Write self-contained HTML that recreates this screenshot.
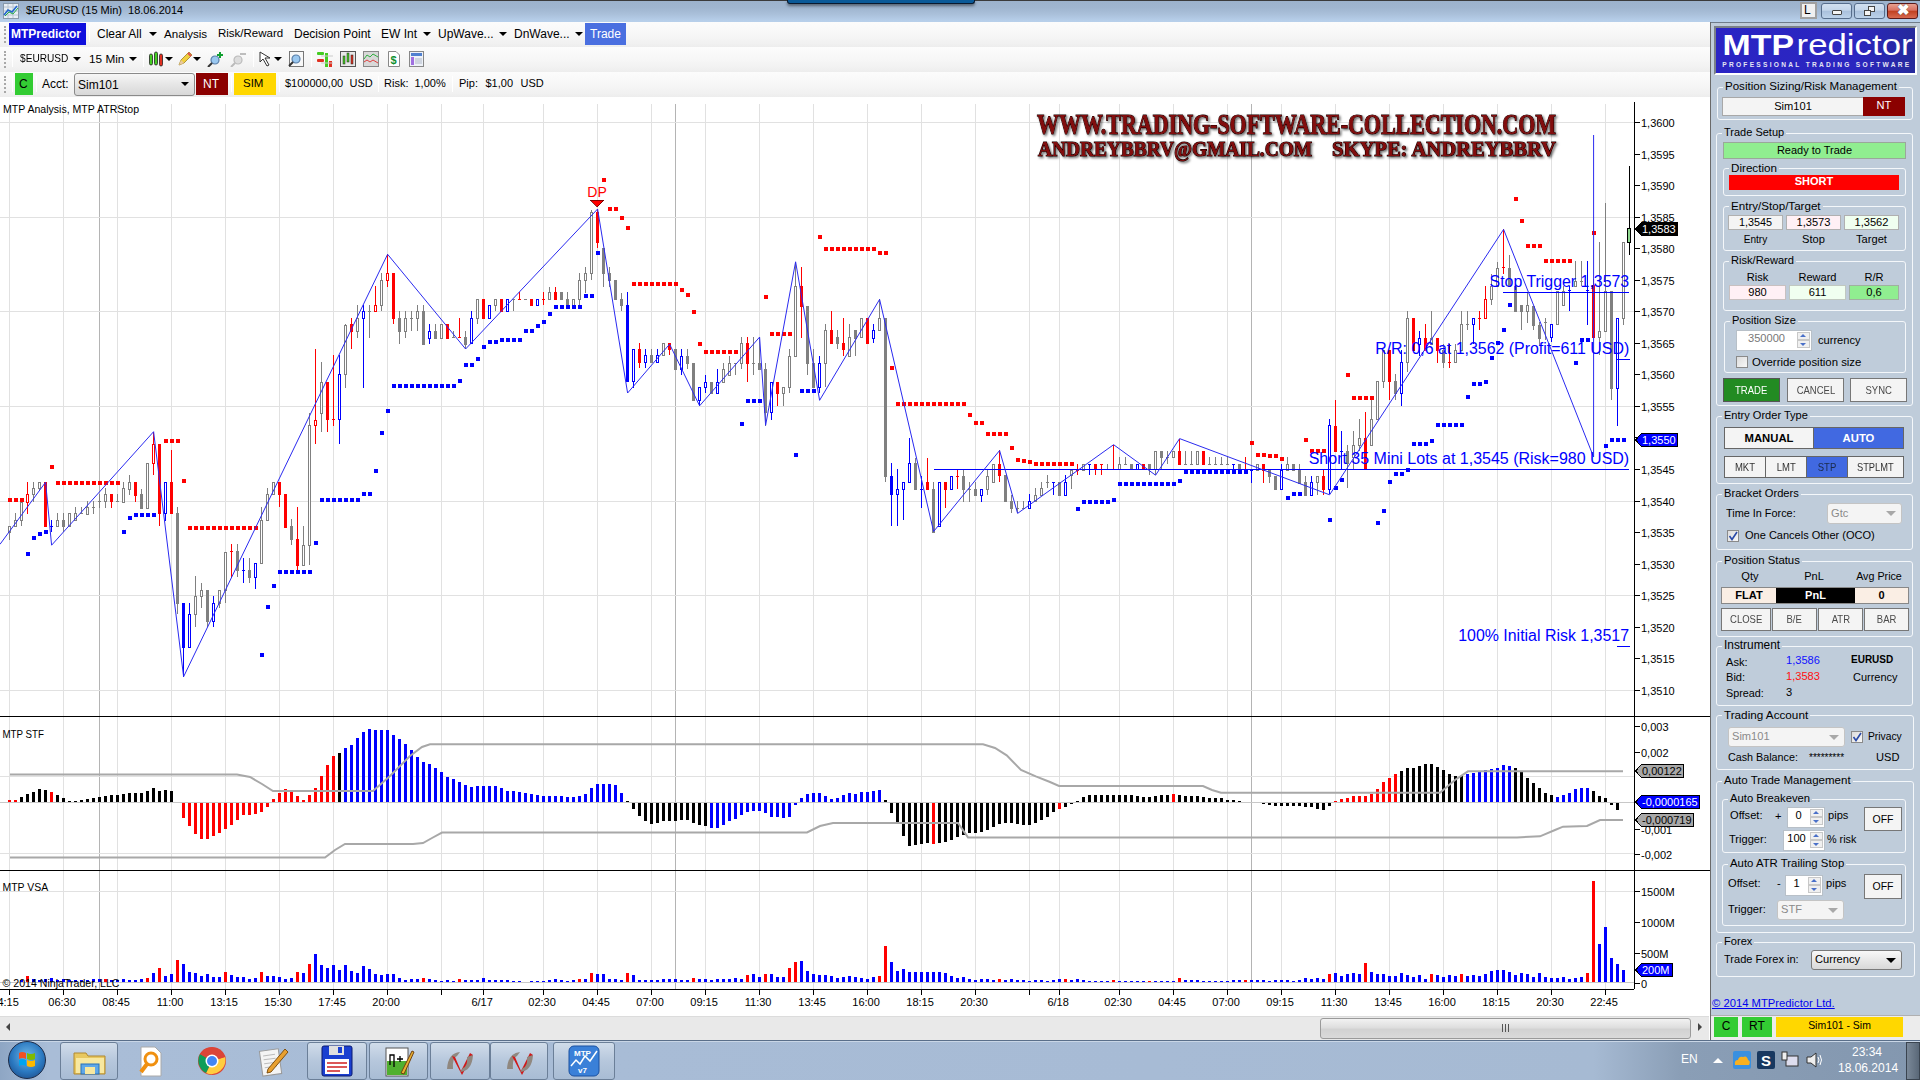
<!DOCTYPE html><html><head><meta charset="utf-8"><style>
*{margin:0;padding:0;box-sizing:border-box}
html,body{width:1920px;height:1080px;overflow:hidden;background:#fff;font-family:"Liberation Sans",sans-serif;font-size:11px;color:#000}
.a{position:absolute}
.tb{position:absolute;left:0;width:1710px;background:linear-gradient(#fcfcfc,#f6f6f6 55%,#f1f1f1 85%,#ededed)}
.grip{position:absolute;left:4px;width:3px;border-left:2px dotted #a8a8a8}
.sep{position:absolute;width:1px;background:#c8c8c8;border-right:1px solid #fff}
.t12{font-size:12px}
</style></head><body>
<div class="a" style="left:0;top:0;width:1920px;height:22px;background:linear-gradient(#9cb2cc 5%,#9fb5cf 35%,#aac0da 65%,#b7cfea 95%)"></div>
<div class="a" style="left:0;top:0;width:1920px;height:1px;background:#3a3a3a"></div>
<div class="a" style="left:787px;top:0;width:188px;height:4px;background:#0b5a98;border:1px solid #0a1a30;border-top:none;border-radius:0 0 3px 3px;box-shadow:0 2px 3px rgba(0,0,0,0.45)"></div>
<svg class="a" style="left:3px;top:3px" width="16" height="16"><rect x="0.5" y="0.5" width="15" height="15" fill="#e8eef5" stroke="#8899aa"/><path d="M1 4H15M1 8H15M1 12H15M5 1V15M10 1V15" stroke="#b8c4d0" stroke-width="1"/><path d="M1 12L5 7L9 9L14 3" stroke="#2266cc" stroke-width="1.6" fill="none"/><path d="M2 13L6 9L10 11L15 5" stroke="#22aa44" stroke-width="1" fill="none"/></svg>
<div class="a" style="left:26px;top:4px;font-size:11px;color:#000">$EURUSD (15 Min)&nbsp; 18.06.2014</div>
<div class="a" style="left:1800px;top:2px;width:17px;height:17px;background:#f0f0f0;border:2px solid #a0a0a0"></div>
<div class="a" style="left:1804px;top:4px;font-size:12px;line-height:13px">L</div>
<div class="a" style="left:1821px;top:3px;width:31px;height:16px;border:1px solid #566d8c;border-radius:3px;background:linear-gradient(#d2e0f0,#c3d5ea 45%,#a9c0dc 50%,#bcd2ea)"></div>
<div class="a" style="left:1854px;top:3px;width:31px;height:16px;border:1px solid #566d8c;border-radius:3px;background:linear-gradient(#d2e0f0,#c3d5ea 45%,#a9c0dc 50%,#bcd2ea)"></div>
<div class="a" style="left:1832px;top:10px;width:10px;height:5px;background:#f4f4f4;border:1px solid #444;border-radius:1px"></div>
<div class="a" style="left:1868px;top:6px;width:7px;height:6px;background:#f4f4f4;border:1px solid #444"></div>
<div class="a" style="left:1864px;top:10px;width:7px;height:6px;background:#f4f4f4;border:1px solid #444"></div>
<div class="a" style="left:1887px;top:3px;width:31px;height:16px;border:1px solid #5a1a1a;border-radius:3px;background:linear-gradient(#e8a090,#d87060 45%,#c04020 50%,#d86a50)"></div>
<div class="a" style="left:1897px;top:1px;font-size:15px;font-weight:bold;color:#fff;text-shadow:0 0 1px #333">&#x2716;</div>
<div class="tb" style="top:22px;height:25px"></div>
<div class="grip" style="top:26px;height:17px"></div>
<div class="tb" style="top:47px;height:25px"></div>
<div class="grip" style="top:51px;height:17px"></div>
<div class="tb" style="top:72px;height:25px"></div>
<div class="grip" style="top:76px;height:17px"></div>
<div class="a" style="left:9px;top:23px;width:77px;height:22px;background:#1010dd"></div>
<div class="a" style="left:11px;top:27px;font-size:12px;font-weight:bold;color:#fff">MTPredictor</div>
<div class="sep" style="left:89px;top:26px;height:16px"></div>
<div class="a" style="left:97px;top:27px;font-size:12px;color:#000;white-space:pre;">Clear All</div>
<div class="a" style="left:149px;top:32px;width:0;height:0;border-left:4px solid transparent;border-right:4px solid transparent;border-top:4px solid #000"></div>
<div class="a" style="left:164px;top:27px;font-size:11.6px;color:#000;white-space:pre;">Analysis</div>
<div class="a" style="left:218px;top:27px;font-size:11.5px;color:#000;white-space:pre;">Risk/Reward</div>
<div class="a" style="left:294px;top:27px;font-size:12px;color:#000;white-space:pre;">Decision Point</div>
<div class="a" style="left:381px;top:27px;font-size:12px;color:#000;white-space:pre;">EW Int</div>
<div class="a" style="left:423px;top:32px;width:0;height:0;border-left:4px solid transparent;border-right:4px solid transparent;border-top:4px solid #000"></div>
<div class="a" style="left:438px;top:27px;font-size:12px;color:#000;white-space:pre;">UpWave...</div>
<div class="a" style="left:499px;top:32px;width:0;height:0;border-left:4px solid transparent;border-right:4px solid transparent;border-top:4px solid #000"></div>
<div class="a" style="left:514px;top:27px;font-size:12px;color:#000;white-space:pre;">DnWave...</div>
<div class="a" style="left:575px;top:32px;width:0;height:0;border-left:4px solid transparent;border-right:4px solid transparent;border-top:4px solid #000"></div>
<div class="a" style="left:585px;top:23px;width:41px;height:22px;background:#4a6fe0"></div>
<div class="a" style="left:590px;top:27px;font-size:12px;color:#fff;white-space:pre;">Trade</div>
<div class="sep" style="left:12px;top:51px;height:16px"></div>
<div class="a" style="left:20px;top:52px;font-size:11px;color:#000;white-space:pre;transform:scaleX(0.92);transform-origin:0 0">$EURUSD</div>
<div class="a" style="left:73px;top:57px;width:0;height:0;border-left:4px solid transparent;border-right:4px solid transparent;border-top:4px solid #000"></div>
<div class="a" style="left:89px;top:52px;font-size:11.8px;color:#000;white-space:pre;">15 Min</div>
<div class="a" style="left:129px;top:57px;width:0;height:0;border-left:4px solid transparent;border-right:4px solid transparent;border-top:4px solid #000"></div>
<div class="sep" style="left:143px;top:51px;height:16px"></div>
<svg class="a" style="left:148px;top:51px" width="16" height="16"><g stroke="#222" stroke-width="0.8"><rect x="1.5" y="3" width="3" height="11" rx="1.5" fill="#44cc22"/><rect x="6.5" y="1" width="3" height="13" rx="1.5" fill="#44cc22"/><rect x="11.5" y="3" width="3" height="12" rx="1.5" fill="#e03020"/></g></svg>
<div class="a" style="left:165px;top:57px;width:0;height:0;border-left:4px solid transparent;border-right:4px solid transparent;border-top:4px solid #000"></div>
<svg class="a" style="left:177px;top:51px" width="16" height="16"><path d="M2 14L4 9L12 1L15 4L7 12Z" fill="#f0d040" stroke="#a08020" stroke-width="0.8"/><path d="M11 2L14 5" stroke="#e05050" stroke-width="2"/><path d="M2 14L4 9L7 12Z" fill="#e8c8a0"/></svg>
<div class="a" style="left:193px;top:57px;width:0;height:0;border-left:4px solid transparent;border-right:4px solid transparent;border-top:4px solid #000"></div>
<svg class="a" style="left:207px;top:51px" width="17" height="16"><circle cx="8" cy="9" r="4" fill="#9ac8f0" stroke="#5a7fa8" stroke-width="1.2"/><path d="M5 12L1 16" stroke="#333" stroke-width="2"/><path d="M13 1V7M10 4H16" stroke="#10a030" stroke-width="2"/></svg>
<svg class="a" style="left:230px;top:51px" width="17" height="16"><circle cx="8" cy="9" r="4" fill="#ddd" stroke="#bbb" stroke-width="1.2"/><path d="M5 12L1 16" stroke="#bbb" stroke-width="2"/><path d="M10 3H16" stroke="#aaa" stroke-width="1.5"/></svg>
<div class="sep" style="left:253px;top:51px;height:16px"></div>
<svg class="a" style="left:259px;top:51px" width="14" height="16"><path d="M1 1L1 11L4 8L8 15L10 14L6 7L11 7Z" fill="#fff" stroke="#333" stroke-width="1"/></svg>
<div class="a" style="left:274px;top:57px;width:0;height:0;border-left:4px solid transparent;border-right:4px solid transparent;border-top:4px solid #000"></div>
<svg class="a" style="left:288px;top:51px" width="16" height="16"><rect x="1.5" y="0.5" width="14" height="15" fill="#f8f8f8" stroke="#777"/><circle cx="8" cy="8" r="4" fill="#9ac8f0" stroke="#5a7fa8" stroke-width="1.2"/><path d="M5 11L1 15" stroke="#333" stroke-width="2"/></svg>
<div class="sep" style="left:311px;top:51px;height:16px"></div>
<svg class="a" style="left:317px;top:51px" width="16" height="16"><rect x="0" y="1" width="7" height="3" rx="1" fill="#44cc22"/><rect x="0" y="8" width="7" height="3" rx="1" fill="#e03020"/><rect x="8" y="2" width="3" height="14" fill="#44cc22"/><rect x="12" y="10" width="3" height="6" fill="#e03020"/><path d="M4 5H16M4 12H16" stroke="#ccc"/></svg>
<svg class="a" style="left:340px;top:51px" width="16" height="16"><rect x="0.5" y="0.5" width="15" height="15" fill="#e8e8e8" stroke="#555"/><rect x="3" y="5" width="2" height="8" fill="#44cc22" stroke="#222" stroke-width="0.5"/><rect x="7" y="2" width="2" height="9" fill="#44cc22" stroke="#222" stroke-width="0.5"/><rect x="11" y="4" width="2" height="9" fill="#e03020" stroke="#222" stroke-width="0.5"/></svg>
<svg class="a" style="left:363px;top:51px" width="16" height="16"><rect x="0.5" y="0.5" width="15" height="15" fill="#d8d8d8" stroke="#888"/><path d="M1 8L4 4L7 6L10 3L15 6" stroke="#30b040" fill="none"/><path d="M1 11L4 9L7 11L10 9L15 12" stroke="#e04040" fill="none"/></svg>
<svg class="a" style="left:388px;top:51px" width="12" height="16"><path d="M0.5 0.5H8L11.5 4V15.5H0.5Z" fill="#fff" stroke="#888"/><text x="2.5" y="13" font-size="11" font-weight="bold" fill="#109030" font-family="Liberation Sans">$</text></svg>
<svg class="a" style="left:409px;top:51px" width="15" height="16"><rect x="0.5" y="0.5" width="14" height="15" fill="#eef2f8" stroke="#888"/><rect x="2" y="2" width="11" height="3" fill="#5080d0"/><rect x="2" y="6" width="3" height="8" fill="#a070e0"/><path d="M6 8H13M6 10H13M6 12H13" stroke="#b0b8c8"/></svg>
<div class="sep" style="left:12px;top:76px;height:16px"></div>
<div class="a" style="left:15px;top:73px;width:18px;height:22px;background:#33cc33"></div>
<div class="a" style="left:19px;top:77px;font-size:12px;color:#000;white-space:pre;">C</div>
<div class="sep" style="left:36px;top:76px;height:16px"></div>
<div class="a" style="left:42px;top:77px;font-size:12px;color:#000;white-space:pre;">Acct:</div>
<div class="a" style="left:74px;top:73px;width:121px;height:23px;border:1px solid #8a8a8a;border-radius:3px;background:linear-gradient(#f6f6f6,#e6e6e6 50%,#d8d8d8)"></div>
<div class="a" style="left:78px;top:78px;font-size:12px;color:#000;white-space:pre;">Sim101</div>
<div class="a" style="left:181px;top:82px;width:0;height:0;border-left:4px solid transparent;border-right:4px solid transparent;border-top:4px solid #000"></div>
<div class="a" style="left:196px;top:73px;width:32px;height:22px;background:#8b0000"></div>
<div class="a" style="left:203px;top:77px;font-size:12px;color:#fff;white-space:pre;">NT</div>
<div class="sep" style="left:231px;top:76px;height:16px"></div>
<div class="a" style="left:234px;top:73px;width:42px;height:22px;background:#ffd700"></div>
<div class="a" style="left:243px;top:77px;font-size:11.5px;color:#000;white-space:pre;">SIM</div>
<div class="sep" style="left:279px;top:76px;height:16px"></div>
<div class="a" style="left:285px;top:77px;font-size:11px;color:#000;white-space:pre;">$100000,00</div>
<div class="a" style="left:349.5px;top:77px;font-size:11px;color:#000;white-space:pre;">USD</div>
<div class="sep" style="left:378px;top:76px;height:16px"></div>
<div class="a" style="left:384px;top:77px;font-size:11px;color:#000;white-space:pre;">Risk:</div>
<div class="a" style="left:414.5px;top:77px;font-size:11px;color:#000;white-space:pre;">1,00%</div>
<div class="sep" style="left:452px;top:76px;height:16px"></div>
<div class="a" style="left:459px;top:77px;font-size:11px;color:#000;white-space:pre;">Pip:</div>
<div class="a" style="left:485.5px;top:77px;font-size:11px;color:#000;white-space:pre;">$1,00</div>
<div class="a" style="left:520.5px;top:77px;font-size:11px;color:#000;white-space:pre;">USD</div>
<svg class="a" style="left:0;top:97px" width="1710" height="919" viewBox="0 97 1710 919" shape-rendering="crispEdges"><rect x="0" y="97" width="1710" height="919" fill="#fff"/><path d="M9.5 104V716M9.5 717V870M9.5 871V989M63.5 104V716M63.5 717V870M63.5 871V989M117.5 104V716M117.5 717V870M117.5 871V989M171.5 104V716M171.5 717V870M171.5 871V989M225.5 104V716M225.5 717V870M225.5 871V989M279.5 104V716M279.5 717V870M279.5 871V989M333.5 104V716M333.5 717V870M333.5 871V989M387.5 104V716M387.5 717V870M387.5 871V989M441.5 104V716M441.5 717V870M441.5 871V989M483.5 104V716M483.5 717V870M483.5 871V989M543.5 104V716M543.5 717V870M543.5 871V989M597.5 104V716M597.5 717V870M597.5 871V989M651.5 104V716M651.5 717V870M651.5 871V989M705.5 104V716M705.5 717V870M705.5 871V989M759.5 104V716M759.5 717V870M759.5 871V989M813.5 104V716M813.5 717V870M813.5 871V989M867.5 104V716M867.5 717V870M867.5 871V989M921.5 104V716M921.5 717V870M921.5 871V989M975.5 104V716M975.5 717V870M975.5 871V989M1029.5 104V716M1029.5 717V870M1029.5 871V989M1059.5 104V716M1059.5 717V870M1059.5 871V989M1119.5 104V716M1119.5 717V870M1119.5 871V989M1173.5 104V716M1173.5 717V870M1173.5 871V989M1227.5 104V716M1227.5 717V870M1227.5 871V989M1281.5 104V716M1281.5 717V870M1281.5 871V989M1335.5 104V716M1335.5 717V870M1335.5 871V989M1389.5 104V716M1389.5 717V870M1389.5 871V989M1443.5 104V716M1443.5 717V870M1443.5 871V989M1497.5 104V716M1497.5 717V870M1497.5 871V989M1551.5 104V716M1551.5 717V870M1551.5 871V989M1605.5 104V716M1605.5 717V870M1605.5 871V989" stroke="#e1e1e1" stroke-width="1" fill="none"/><path d="M99.5 104V989M675.5 104V989M1251.5 104V989" stroke="#b4b4b4" stroke-width="1" fill="none"/><path d="M0 122.5H1634M0 217.5H1634M0 311.5H1634M0 406.5H1634M0 501.5H1634M0 595.5H1634M0 690.5H1634M0 776.5H1634M0 853.5H1634M0 891.5H1634" stroke="#e1e1e1" stroke-width="1" fill="none"/><path d="M0 802.5H1634M0 982.5H1634" stroke="#c8c8c8" stroke-width="1" fill="none"/><path d="M0 716.5H1710M0 870.5H1710M0 989.5H1634M1634.5 102V989" stroke="#000" stroke-width="1" fill="none"/><path d="M1635 122.5H1640M1635 154.5H1640M1635 185.5H1640M1635 217.5H1640M1635 248.5H1640M1635 280.5H1640M1635 311.5H1640M1635 343.5H1640M1635 374.5H1640M1635 406.5H1640M1635 437.5H1640M1635 469.5H1640M1635 501.5H1640M1635 532.5H1640M1635 564.5H1640M1635 595.5H1640M1635 627.5H1640M1635 658.5H1640M1635 690.5H1640M1635 726.5H1640M1635 752.5H1640M1635 829.5H1640M1635 854.5H1640M1635 891.5H1640M1635 922.5H1640M1635 953.5H1640M1635 983.5H1640M9.5 990V995M63.5 990V995M117.5 990V995M171.5 990V995M225.5 990V995M279.5 990V995M333.5 990V995M387.5 990V995M441.5 990V995M483.5 990V995M543.5 990V995M597.5 990V995M651.5 990V995M705.5 990V995M759.5 990V995M813.5 990V995M867.5 990V995M921.5 990V995M975.5 990V995M1029.5 990V995M1059.5 990V995M1119.5 990V995M1173.5 990V995M1227.5 990V995M1281.5 990V995M1335.5 990V995M1389.5 990V995M1443.5 990V995M1497.5 990V995M1551.5 990V995M1605.5 990V995" stroke="#000" stroke-width="1" fill="none"/><g font-family="Liberation Sans" font-size="11" fill="#000" shape-rendering="auto"><text x="1641" y="126.5">1,3600</text><text x="1641" y="158.5">1,3595</text><text x="1641" y="189.5">1,3590</text><text x="1641" y="221.5">1,3585</text><text x="1641" y="252.5">1,3580</text><text x="1641" y="284.5">1,3575</text><text x="1641" y="315.5">1,3570</text><text x="1641" y="347.5">1,3565</text><text x="1641" y="378.5">1,3560</text><text x="1641" y="410.5">1,3555</text><text x="1641" y="441.5">1,3550</text><text x="1641" y="473.5">1,3545</text><text x="1641" y="505.5">1,3540</text><text x="1641" y="536.5">1,3535</text><text x="1641" y="568.5">1,3530</text><text x="1641" y="599.5">1,3525</text><text x="1641" y="631.5">1,3520</text><text x="1641" y="662.5">1,3515</text><text x="1641" y="694.5">1,3510</text><text x="1641" y="730.5">0,003</text><text x="1641" y="756.5">0,002</text><text x="1641" y="833.5">-0,001</text><text x="1641" y="858.5">-0,002</text><text x="1641" y="895.5">1500M</text><text x="1641" y="926.5">1000M</text><text x="1641" y="957.5">500M</text><text x="1641" y="987.5">0</text><text x="8.1" y="1006" text-anchor="middle">4:15</text><text x="62.1" y="1006" text-anchor="middle">06:30</text><text x="116.1" y="1006" text-anchor="middle">08:45</text><text x="170.1" y="1006" text-anchor="middle">11:00</text><text x="224.1" y="1006" text-anchor="middle">13:15</text><text x="278.1" y="1006" text-anchor="middle">15:30</text><text x="332.1" y="1006" text-anchor="middle">17:45</text><text x="386.1" y="1006" text-anchor="middle">20:00</text><text x="482.1" y="1006" text-anchor="middle">6/17</text><text x="542.1" y="1006" text-anchor="middle">02:30</text><text x="596.1" y="1006" text-anchor="middle">04:45</text><text x="650.1" y="1006" text-anchor="middle">07:00</text><text x="704.1" y="1006" text-anchor="middle">09:15</text><text x="758.1" y="1006" text-anchor="middle">11:30</text><text x="812.1" y="1006" text-anchor="middle">13:45</text><text x="866.1" y="1006" text-anchor="middle">16:00</text><text x="920.1" y="1006" text-anchor="middle">18:15</text><text x="974.1" y="1006" text-anchor="middle">20:30</text><text x="1058.1" y="1006" text-anchor="middle">6/18</text><text x="1118.1" y="1006" text-anchor="middle">02:30</text><text x="1172.1" y="1006" text-anchor="middle">04:45</text><text x="1226.1" y="1006" text-anchor="middle">07:00</text><text x="1280.1" y="1006" text-anchor="middle">09:15</text><text x="1334.1" y="1006" text-anchor="middle">11:30</text><text x="1388.1" y="1006" text-anchor="middle">13:45</text><text x="1442.1" y="1006" text-anchor="middle">16:00</text><text x="1496.1" y="1006" text-anchor="middle">18:15</text><text x="1550.1" y="1006" text-anchor="middle">20:30</text><text x="1604.1" y="1006" text-anchor="middle">22:45</text></g><g shape-rendering="crispEdges"><path fill="#808080" d="M9 526h1v14h-1zM8 526h3v7h-3zM15 513h1v13h-1zM14 520h3v7h-3zM21 502h1v24h-1zM20 502h3v19h-3zM33 482h1v20h-1zM32 488h3v7h-3zM39 482h1v8h-1zM38 482h3v7h-3zM57 513h1v13h-1zM56 520h3v7h-3zM63 513h1v19h-1zM62 520h3v7h-3zM69 513h1v13h-1zM68 513h3v14h-3zM75 507h1v13h-1zM74 513h3v8h-3zM81 507h1v7h-1zM80 513h3v1h-3zM87 501h1v13h-1zM86 507h3v8h-3zM93 501h1v13h-1zM92 507h3v1h-3zM99 494h1v14h-1zM98 501h3v1h-3zM105 488h1v20h-1zM104 494h3v8h-3zM117 494h1v7h-1zM116 501h3v1h-3zM123 482h1v20h-1zM122 488h3v15h-3zM129 475h1v20h-1zM128 482h3v8h-3zM141 489h1v19h-1zM140 494h3v15h-3zM147 463h1v45h-1zM146 463h3v46h-3zM177 507h1v107h-1zM176 513h3v91h-3zM195 576h1v51h-1zM194 596h3v19h-3zM201 583h1v25h-1zM200 590h3v7h-3zM207 590h1v37h-1zM206 590h3v32h-3zM219 590h1v18h-1zM218 590h3v14h-3zM225 552h1v51h-1zM224 552h3v39h-3zM237 544h1v33h-1zM236 551h3v20h-3zM249 558h1v25h-1zM248 570h3v8h-3zM261 507h1v56h-1zM260 520h3v44h-3zM267 488h1v32h-1zM266 494h3v27h-3zM273 482h1v12h-1zM272 482h3v13h-3zM291 519h1v26h-1zM290 526h3v14h-3zM303 526h1v39h-1zM302 545h3v21h-3zM309 413h1v152h-1zM308 425h3v121h-3zM321 362h1v70h-1zM320 382h3v32h-3zM345 324h1v64h-1zM344 325h3v50h-3zM357 305h1v33h-1zM356 318h3v14h-3zM369 305h1v33h-1zM368 311h3v1h-3zM381 273h1v38h-1zM380 280h3v26h-3zM399 311h1v33h-1zM398 318h3v14h-3zM405 311h1v27h-1zM404 318h3v14h-3zM411 311h1v20h-1zM410 318h3v1h-3zM417 305h1v26h-1zM416 311h3v8h-3zM423 305h1v39h-1zM422 311h3v34h-3zM435 324h1v14h-1zM434 331h3v8h-3zM441 324h1v14h-1zM440 324h3v15h-3zM453 331h1v6h-1zM452 337h3v1h-3zM465 331h1v18h-1zM464 337h3v8h-3zM477 299h1v25h-1zM476 299h3v20h-3zM495 299h1v12h-1zM494 299h3v7h-3zM513 299h1v12h-1zM512 299h3v1h-3zM524 299h3v1h-3zM549 287h1v12h-1zM548 292h3v8h-3zM561 292h1v7h-1zM560 292h3v8h-3zM567 292h1v13h-1zM566 299h3v7h-3zM573 299h1v6h-1zM572 299h3v7h-3zM579 273h1v32h-1zM578 280h3v20h-3zM585 267h1v26h-1zM584 273h3v8h-3zM591 210h1v70h-1zM590 212h3v62h-3zM603 248h1v39h-1zM602 248h3v26h-3zM609 267h1v20h-1zM608 273h3v8h-3zM615 280h1v19h-1zM614 280h3v20h-3zM621 293h1v18h-1zM620 299h3v7h-3zM651 349h1v13h-1zM650 355h3v8h-3zM663 343h1v12h-1zM662 343h3v13h-3zM675 349h1v20h-1zM674 349h3v21h-3zM687 349h1v20h-1zM686 356h3v8h-3zM693 363h1v37h-1zM692 363h3v38h-3zM711 382h1v11h-1zM710 382h3v12h-3zM723 363h1v19h-1zM722 369h3v14h-3zM729 356h1v19h-1zM728 363h3v13h-3zM735 363h1v12h-1zM734 363h3v1h-3zM741 337h1v32h-1zM740 343h3v21h-3zM753 337h1v38h-1zM752 363h3v1h-3zM759 337h1v32h-1zM758 363h3v7h-3zM765 363h1v63h-1zM764 369h3v44h-3zM783 387h1v19h-1zM782 387h3v7h-3zM789 349h1v44h-1zM788 356h3v32h-3zM795 262h1v94h-1zM794 286h3v71h-3zM807 306h1v69h-1zM806 306h3v58h-3zM813 349h1v38h-1zM812 363h3v25h-3zM825 324h1v63h-1zM824 330h3v34h-3zM837 330h1v19h-1zM836 337h3v7h-3zM849 324h1v32h-1zM848 337h3v20h-3zM855 330h1v26h-1zM854 330h3v9h-3zM861 318h1v19h-1zM860 318h3v20h-3zM879 299h1v31h-1zM878 318h3v13h-3zM885 318h1v164h-1zM884 318h3v159h-3zM915 458h1v31h-1zM914 463h3v27h-3zM933 482h1v50h-1zM932 489h3v44h-3zM963 469h1v33h-1zM962 476h3v14h-3zM969 482h1v20h-1zM968 489h3v1h-3zM975 482h1v13h-1zM974 489h3v7h-3zM987 469h1v26h-1zM986 476h3v14h-3zM993 464h1v18h-1zM992 464h3v19h-3zM1005 475h1v26h-1zM1004 475h3v27h-3zM1011 495h1v18h-1zM1010 501h3v8h-3zM1017 501h1v12h-1zM1016 508h3v1h-3zM1023 501h1v7h-1zM1022 508h3v1h-3zM1035 488h1v13h-1zM1034 495h3v7h-3zM1041 482h1v13h-1zM1040 488h3v8h-3zM1047 475h1v13h-1zM1046 482h3v1h-3zM1059 482h1v13h-1zM1058 482h3v14h-3zM1071 470h1v19h-1zM1070 470h3v6h-3zM1083 464h1v6h-1zM1082 464h3v7h-3zM1107 464h1v5h-1zM1106 469h3v1h-3zM1119 457h1v12h-1zM1118 464h3v6h-3zM1125 457h1v7h-1zM1124 464h3v1h-3zM1131 464h1v5h-1zM1130 464h3v6h-3zM1149 464h1v11h-1zM1148 464h3v6h-3zM1155 451h1v24h-1zM1154 451h3v19h-3zM1161 451h1v18h-1zM1160 451h3v7h-3zM1167 451h1v13h-1zM1166 457h3v1h-3zM1173 451h1v6h-1zM1172 451h3v7h-3zM1185 451h1v13h-1zM1184 464h3v1h-3zM1191 451h1v13h-1zM1190 464h3v1h-3zM1197 451h1v13h-1zM1196 451h3v14h-3zM1209 457h1v7h-1zM1208 464h3v1h-3zM1215 457h1v7h-1zM1214 464h3v1h-3zM1221 457h1v7h-1zM1220 464h3v1h-3zM1227 457h1v7h-1zM1226 464h3v1h-3zM1239 464h1v6h-1zM1238 464h3v7h-3zM1257 464h1v6h-1zM1256 464h3v7h-3zM1269 470h1v13h-1zM1268 470h3v7h-3zM1275 476h1v13h-1zM1274 476h3v14h-3zM1287 457h1v13h-1zM1286 464h3v7h-3zM1293 464h1v6h-1zM1292 464h3v7h-3zM1299 464h1v19h-1zM1298 470h3v14h-3zM1305 476h1v19h-1zM1304 482h3v14h-3zM1317 476h1v19h-1zM1316 476h3v7h-3zM1347 445h1v43h-1zM1346 451h3v13h-3zM1353 431h1v39h-1zM1352 445h3v13h-3zM1359 419h1v32h-1zM1358 438h3v8h-3zM1371 400h1v45h-1zM1370 419h3v27h-3zM1377 381h1v38h-1zM1376 381h3v39h-3zM1383 350h1v38h-1zM1382 350h3v32h-3zM1395 374h1v26h-1zM1394 381h3v13h-3zM1407 311h1v61h-1zM1406 318h3v45h-3zM1431 311h1v33h-1zM1430 338h3v7h-3zM1443 344h1v24h-1zM1442 350h3v13h-3zM1455 344h1v18h-1zM1454 350h3v13h-3zM1461 311h1v39h-1zM1460 324h3v27h-3zM1467 311h1v19h-1zM1466 324h3v1h-3zM1491 274h1v31h-1zM1490 286h3v14h-3zM1497 262h1v24h-1zM1496 268h3v19h-3zM1509 255h1v31h-1zM1508 268h3v19h-3zM1515 286h1v25h-1zM1514 286h3v26h-3zM1521 305h1v25h-1zM1520 305h3v7h-3zM1527 293h1v30h-1zM1526 305h3v7h-3zM1533 306h1v24h-1zM1532 306h3v20h-3zM1539 322h1v23h-1zM1538 325h3v14h-3zM1545 318h1v22h-1zM1544 322h3v1h-3zM1557 291h1v33h-1zM1556 291h3v34h-3zM1563 286h1v19h-1zM1562 291h3v15h-3zM1575 261h1v25h-1zM1574 281h3v6h-3zM1581 261h1v25h-1zM1580 281h3v1h-3zM1599 242h1v113h-1zM1598 331h3v7h-3zM1605 203h1v128h-1zM1604 291h3v41h-3zM1611 291h1v109h-1zM1610 291h3v98h-3zM1623 242h1v83h-1zM1622 242h3v77h-3z"/><path fill="#ff0000" d="M27 482h1v32h-1zM26 494h3v9h-3zM45 482h1v44h-1zM44 482h3v45h-3zM111 494h1v14h-1zM110 494h3v8h-3zM135 482h1v20h-1zM134 482h3v14h-3zM153 432h1v43h-1zM152 444h3v20h-3zM159 444h1v82h-1zM158 444h3v70h-3zM171 450h1v63h-1zM170 482h3v32h-3zM231 544h1v33h-1zM230 551h3v1h-3zM279 482h1v25h-1zM278 482h3v13h-3zM285 494h1v33h-1zM284 494h3v34h-3zM297 507h1v64h-1zM296 539h3v27h-3zM315 349h1v95h-1zM314 420h3v6h-3zM327 382h1v50h-1zM326 382h3v38h-3zM333 355h1v71h-1zM332 419h3v1h-3zM351 318h1v31h-1zM350 324h3v8h-3zM375 286h1v25h-1zM374 305h3v7h-3zM387 254h1v33h-1zM386 273h3v8h-3zM393 273h1v51h-1zM392 273h3v46h-3zM447 324h1v14h-1zM446 324h3v15h-3zM459 318h1v19h-1zM458 337h3v1h-3zM483 299h1v19h-1zM482 299h3v20h-3zM501 299h1v12h-1zM500 299h3v13h-3zM519 292h1v7h-1zM518 299h3v1h-3zM531 299h1v6h-1zM530 299h3v7h-3zM543 292h1v13h-1zM542 299h3v1h-3zM555 287h1v12h-1zM554 292h3v8h-3zM597 209h1v39h-1zM596 212h3v31h-3zM639 343h1v25h-1zM638 349h3v14h-3zM669 343h1v12h-1zM668 343h3v7h-3zM747 337h1v45h-1zM746 343h3v21h-3zM777 382h1v24h-1zM776 382h3v12h-3zM801 267h1v71h-1zM800 286h3v21h-3zM831 311h1v32h-1zM830 330h3v14h-3zM843 318h1v38h-1zM842 343h3v7h-3zM867 318h1v25h-1zM866 318h3v26h-3zM927 458h1v31h-1zM926 482h3v8h-3zM945 482h1v26h-1zM944 482h3v8h-3zM957 469h1v20h-1zM956 476h3v1h-3zM999 450h1v32h-1zM998 464h3v12h-3zM1077 464h1v11h-1zM1076 470h3v1h-3zM1095 464h1v11h-1zM1094 464h3v6h-3zM1101 464h1v11h-1zM1100 464h3v1h-3zM1113 445h1v24h-1zM1112 469h3v1h-3zM1143 464h1v5h-1zM1142 464h3v6h-3zM1179 439h1v25h-1zM1178 451h3v14h-3zM1203 451h1v13h-1zM1202 451h3v14h-3zM1245 457h1v13h-1zM1244 470h3v1h-3zM1263 464h1v19h-1zM1262 464h3v7h-3zM1323 470h1v25h-1zM1322 476h3v14h-3zM1335 400h1v51h-1zM1334 426h3v26h-3zM1365 412h1v57h-1zM1364 438h3v32h-3zM1389 350h1v50h-1zM1388 350h3v32h-3zM1413 318h1v32h-1zM1412 318h3v33h-3zM1425 324h1v26h-1zM1424 338h3v13h-3zM1437 338h1v25h-1zM1436 338h3v13h-3zM1449 344h1v24h-1zM1448 362h3v1h-3zM1479 311h1v19h-1zM1478 318h3v1h-3zM1485 286h1v32h-1zM1484 299h3v20h-3zM1503 229h1v45h-1zM1502 267h3v1h-3zM1593 279h1v59h-1zM1592 285h3v53h-3z"/><path fill="#0000ff" d="M51 520h1v12h-1zM50 526h3v1h-3zM165 482h1v39h-1zM164 482h3v32h-3zM183 603h1v74h-1zM182 603h3v45h-3zM189 603h1v44h-1zM188 614h3v34h-3zM213 596h1v31h-1zM212 603h3v19h-3zM243 558h1v25h-1zM242 570h3v1h-3zM255 563h1v26h-1zM254 563h3v15h-3zM339 355h1v89h-1zM338 374h3v46h-3zM363 305h1v83h-1zM362 311h3v8h-3zM429 324h1v20h-1zM428 331h3v8h-3zM471 311h1v32h-1zM470 318h3v26h-3zM489 305h1v13h-1zM488 305h3v14h-3zM507 299h1v12h-1zM506 299h3v13h-3zM537 299h1v6h-1zM536 299h3v7h-3zM627 292h1v89h-1zM626 305h3v77h-3zM633 349h1v39h-1zM632 349h3v33h-3zM645 349h1v19h-1zM644 355h3v8h-3zM657 349h1v13h-1zM656 355h3v8h-3zM681 349h1v26h-1zM680 356h3v14h-3zM699 387h1v19h-1zM698 387h3v14h-3zM705 375h1v18h-1zM704 382h3v6h-3zM717 369h1v24h-1zM716 382h3v12h-3zM771 382h1v38h-1zM770 382h3v31h-3zM819 356h1v37h-1zM818 363h3v25h-3zM873 324h1v19h-1zM872 330h3v9h-3zM891 463h1v63h-1zM890 476h3v19h-3zM897 469h1v57h-1zM896 489h3v6h-3zM903 482h1v38h-1zM902 482h3v8h-3zM909 438h1v44h-1zM908 463h3v20h-3zM921 476h1v32h-1zM920 489h3v1h-3zM939 482h1v44h-1zM938 482h3v45h-3zM951 476h1v13h-1zM950 476h3v14h-3zM981 489h1v13h-1zM980 489h3v7h-3zM1029 494h1v14h-1zM1028 501h3v8h-3zM1053 482h1v13h-1zM1052 482h3v1h-3zM1065 475h1v20h-1zM1064 482h3v14h-3zM1089 464h1v11h-1zM1088 464h3v1h-3zM1137 464h1v5h-1zM1136 464h3v6h-3zM1233 464h1v6h-1zM1232 464h3v1h-3zM1251 470h1v13h-1zM1250 470h3v1h-3zM1281 464h1v25h-1zM1280 470h3v20h-3zM1311 476h1v19h-1zM1310 482h3v14h-3zM1329 419h1v75h-1zM1328 425h3v65h-3zM1341 431h1v39h-1zM1340 451h3v1h-3zM1401 350h1v56h-1zM1400 362h3v32h-3zM1419 331h1v25h-1zM1418 338h3v7h-3zM1473 318h1v26h-1zM1472 318h3v7h-3zM1551 324h1v18h-1zM1550 324h3v14h-3zM1569 286h1v25h-1zM1568 290h3v1h-3zM1587 261h1v64h-1zM1586 290h3v1h-3zM1617 318h1v108h-1zM1616 318h3v71h-3z"/><path fill="#fff" d="M9 527h1v5h-1zM15 521h1v5h-1zM21 503h1v17h-1zM27 495h1v7h-1zM33 489h1v5h-1zM39 483h1v5h-1zM57 521h1v5h-1zM69 514h1v12h-1zM75 514h1v6h-1zM87 508h1v6h-1zM105 495h1v6h-1zM123 489h1v13h-1zM129 483h1v6h-1zM147 464h1v44h-1zM153 445h1v18h-1zM165 483h1v30h-1zM189 615h1v32h-1zM195 597h1v17h-1zM201 591h1v5h-1zM213 604h1v17h-1zM219 591h1v12h-1zM225 553h1v37h-1zM255 564h1v13h-1zM261 521h1v42h-1zM267 495h1v25h-1zM273 483h1v11h-1zM303 546h1v19h-1zM309 426h1v119h-1zM315 421h1v4h-1zM321 383h1v30h-1zM339 375h1v44h-1zM345 326h1v48h-1zM357 319h1v12h-1zM363 312h1v6h-1zM375 306h1v5h-1zM381 281h1v24h-1zM387 274h1v6h-1zM405 319h1v12h-1zM417 312h1v6h-1zM429 332h1v6h-1zM441 325h1v13h-1zM471 319h1v24h-1zM477 300h1v18h-1zM489 306h1v12h-1zM495 300h1v5h-1zM507 300h1v11h-1zM537 300h1v5h-1zM549 293h1v6h-1zM573 300h1v5h-1zM579 281h1v18h-1zM585 274h1v6h-1zM591 213h1v60h-1zM633 350h1v31h-1zM645 356h1v6h-1zM657 356h1v6h-1zM663 344h1v11h-1zM681 357h1v12h-1zM699 388h1v12h-1zM705 383h1v4h-1zM717 383h1v10h-1zM723 370h1v12h-1zM729 364h1v11h-1zM741 344h1v19h-1zM771 383h1v29h-1zM783 388h1v5h-1zM789 357h1v30h-1zM795 287h1v69h-1zM819 364h1v23h-1zM825 331h1v32h-1zM849 338h1v18h-1zM861 319h1v18h-1zM873 331h1v7h-1zM879 319h1v11h-1zM897 490h1v4h-1zM903 483h1v6h-1zM909 464h1v18h-1zM939 483h1v43h-1zM951 477h1v12h-1zM981 490h1v5h-1zM987 477h1v12h-1zM993 465h1v17h-1zM1029 502h1v6h-1zM1035 496h1v5h-1zM1041 489h1v6h-1zM1065 483h1v12h-1zM1071 471h1v4h-1zM1083 465h1v5h-1zM1119 465h1v4h-1zM1137 465h1v4h-1zM1155 452h1v17h-1zM1173 452h1v5h-1zM1197 452h1v12h-1zM1257 465h1v5h-1zM1281 471h1v18h-1zM1287 465h1v5h-1zM1311 483h1v12h-1zM1317 477h1v5h-1zM1329 426h1v63h-1zM1353 446h1v11h-1zM1359 439h1v6h-1zM1371 420h1v25h-1zM1377 382h1v37h-1zM1383 351h1v30h-1zM1401 363h1v30h-1zM1407 319h1v43h-1zM1419 339h1v5h-1zM1431 339h1v5h-1zM1455 351h1v11h-1zM1461 325h1v25h-1zM1473 319h1v5h-1zM1485 300h1v18h-1zM1491 287h1v12h-1zM1497 269h1v17h-1zM1527 306h1v5h-1zM1551 325h1v12h-1zM1557 292h1v32h-1zM1563 292h1v13h-1zM1575 282h1v4h-1zM1599 332h1v5h-1zM1605 292h1v39h-1zM1617 319h1v69h-1zM1623 243h1v75h-1z"/><rect x="1629" y="166" width="1" height="89" fill="#000"/><rect x="1627.5" y="228.5" width="3" height="14" fill="#90d890" stroke="#000" stroke-width="1"/><path fill="#ff0000" d="M8 498h4v4h-4zM14 498h4v4h-4zM20 498h4v4h-4zM50 465h4v4h-4zM56 481h4v4h-4zM62 481h4v4h-4zM68 481h4v4h-4zM74 481h4v4h-4zM80 481h4v4h-4zM86 481h4v4h-4zM92 481h4v4h-4zM98 481h4v4h-4zM104 481h4v4h-4zM110 481h4v4h-4zM116 481h4v4h-4zM164 439h4v4h-4zM170 439h4v4h-4zM176 439h4v4h-4zM182 479h4v4h-4zM188 526h4v4h-4zM194 526h4v4h-4zM200 526h4v4h-4zM206 526h4v4h-4zM212 526h4v4h-4zM218 526h4v4h-4zM224 526h4v4h-4zM230 526h4v4h-4zM236 526h4v4h-4zM242 526h4v4h-4zM248 526h4v4h-4zM254 526h4v4h-4zM602 178h4v4h-4zM608 207h4v4h-4zM614 207h4v4h-4zM620 216h4v4h-4zM626 226h4v4h-4zM632 282h4v4h-4zM638 282h4v4h-4zM644 282h4v4h-4zM650 282h4v4h-4zM656 282h4v4h-4zM662 282h4v4h-4zM668 282h4v4h-4zM674 282h4v4h-4zM680 288h4v4h-4zM686 293h4v4h-4zM692 310h4v4h-4zM698 342h4v4h-4zM704 350h4v4h-4zM710 350h4v4h-4zM716 350h4v4h-4zM722 350h4v4h-4zM728 350h4v4h-4zM734 350h4v4h-4zM764 295h4v4h-4zM770 332h4v4h-4zM776 332h4v4h-4zM782 332h4v4h-4zM788 332h4v4h-4zM818 235h4v4h-4zM824 247h4v4h-4zM830 247h4v4h-4zM836 247h4v4h-4zM842 247h4v4h-4zM848 247h4v4h-4zM854 247h4v4h-4zM860 247h4v4h-4zM866 247h4v4h-4zM872 247h4v4h-4zM878 251h4v4h-4zM884 251h4v4h-4zM890 366h4v4h-4zM896 402h4v4h-4zM902 402h4v4h-4zM908 402h4v4h-4zM914 402h4v4h-4zM920 402h4v4h-4zM926 402h4v4h-4zM932 402h4v4h-4zM938 402h4v4h-4zM944 402h4v4h-4zM950 402h4v4h-4zM956 402h4v4h-4zM962 402h4v4h-4zM968 413h4v4h-4zM974 421h4v4h-4zM980 421h4v4h-4zM986 432h4v4h-4zM992 432h4v4h-4zM998 432h4v4h-4zM1004 432h4v4h-4zM1010 446h4v4h-4zM1016 458h4v4h-4zM1022 459h4v4h-4zM1028 460h4v4h-4zM1034 462h4v4h-4zM1040 462h4v4h-4zM1046 462h4v4h-4zM1052 462h4v4h-4zM1058 462h4v4h-4zM1064 462h4v4h-4zM1070 462h4v4h-4zM1250 441h4v4h-4zM1256 453h4v4h-4zM1262 453h4v4h-4zM1268 454h4v4h-4zM1274 454h4v4h-4zM1280 457h4v4h-4zM1304 438h4v4h-4zM1310 449h4v4h-4zM1316 449h4v4h-4zM1322 449h4v4h-4zM1346 373h4v4h-4zM1352 396h4v4h-4zM1358 396h4v4h-4zM1364 396h4v4h-4zM1370 396h4v4h-4zM1514 197h4v4h-4zM1520 219h4v4h-4zM1526 244h4v4h-4zM1532 244h4v4h-4zM1538 244h4v4h-4zM1544 259h4v4h-4zM1550 259h4v4h-4zM1556 259h4v4h-4zM1562 259h4v4h-4zM1568 259h4v4h-4zM1592 231h4v4h-4z"/><path fill="#0000ff" d="M26 552h4v4h-4zM32 536h4v4h-4zM38 532h4v4h-4zM44 530h4v4h-4zM122 530h4v4h-4zM128 516h4v4h-4zM134 513h4v4h-4zM140 513h4v4h-4zM146 513h4v4h-4zM152 513h4v4h-4zM260 653h4v4h-4zM266 605h4v4h-4zM272 584h4v4h-4zM278 570h4v4h-4zM284 570h4v4h-4zM290 570h4v4h-4zM296 570h4v4h-4zM302 570h4v4h-4zM308 570h4v4h-4zM314 541h4v4h-4zM320 498h4v4h-4zM326 498h4v4h-4zM332 498h4v4h-4zM338 498h4v4h-4zM344 498h4v4h-4zM350 498h4v4h-4zM356 498h4v4h-4zM362 492h4v4h-4zM368 492h4v4h-4zM374 469h4v4h-4zM380 431h4v4h-4zM386 409h4v4h-4zM392 384h4v4h-4zM398 384h4v4h-4zM404 384h4v4h-4zM410 384h4v4h-4zM416 384h4v4h-4zM422 384h4v4h-4zM428 384h4v4h-4zM434 384h4v4h-4zM440 384h4v4h-4zM446 384h4v4h-4zM452 384h4v4h-4zM458 379h4v4h-4zM464 363h4v4h-4zM470 363h4v4h-4zM476 357h4v4h-4zM482 345h4v4h-4zM488 340h4v4h-4zM494 340h4v4h-4zM500 338h4v4h-4zM506 338h4v4h-4zM512 338h4v4h-4zM518 338h4v4h-4zM524 329h4v4h-4zM530 329h4v4h-4zM536 324h4v4h-4zM542 320h4v4h-4zM548 312h4v4h-4zM554 305h4v4h-4zM560 305h4v4h-4zM566 305h4v4h-4zM572 305h4v4h-4zM578 305h4v4h-4zM584 294h4v4h-4zM590 294h4v4h-4zM596 251h4v4h-4zM794 453h4v4h-4zM740 422h4v4h-4zM746 399h4v4h-4zM752 399h4v4h-4zM758 399h4v4h-4zM800 389h4v4h-4zM806 389h4v4h-4zM812 389h4v4h-4zM1076 507h4v4h-4zM1082 500h4v4h-4zM1088 500h4v4h-4zM1094 500h4v4h-4zM1100 500h4v4h-4zM1106 500h4v4h-4zM1112 498h4v4h-4zM1118 482h4v4h-4zM1124 482h4v4h-4zM1130 482h4v4h-4zM1136 482h4v4h-4zM1142 482h4v4h-4zM1148 482h4v4h-4zM1154 482h4v4h-4zM1160 482h4v4h-4zM1166 482h4v4h-4zM1172 482h4v4h-4zM1178 479h4v4h-4zM1184 470h4v4h-4zM1190 470h4v4h-4zM1196 470h4v4h-4zM1202 470h4v4h-4zM1208 470h4v4h-4zM1214 470h4v4h-4zM1220 470h4v4h-4zM1226 470h4v4h-4zM1232 470h4v4h-4zM1238 470h4v4h-4zM1244 470h4v4h-4zM1286 496h4v4h-4zM1292 492h4v4h-4zM1298 492h4v4h-4zM1328 518h4v4h-4zM1334 486h4v4h-4zM1340 478h4v4h-4zM1376 521h4v4h-4zM1382 509h4v4h-4zM1388 480h4v4h-4zM1394 472h4v4h-4zM1400 472h4v4h-4zM1406 468h4v4h-4zM1412 442h4v4h-4zM1418 442h4v4h-4zM1424 442h4v4h-4zM1430 439h4v4h-4zM1436 423h4v4h-4zM1442 423h4v4h-4zM1448 423h4v4h-4zM1454 423h4v4h-4zM1460 423h4v4h-4zM1466 395h4v4h-4zM1472 382h4v4h-4zM1478 382h4v4h-4zM1484 380h4v4h-4zM1490 356h4v4h-4zM1496 341h4v4h-4zM1502 328h4v4h-4zM1508 303h4v4h-4zM1574 361h4v4h-4zM1580 338h4v4h-4zM1586 338h4v4h-4zM1604 444h4v4h-4zM1610 438h4v4h-4zM1616 438h4v4h-4zM1622 438h4v4h-4z"/><path d="M934 469.5H1629M1503 292.5H1629M1617 359.5H1630M1617 646.5H1630" stroke="#0000ff" stroke-width="1" fill="none"/></g><polyline shape-rendering="geometricPrecision" fill="none" stroke="#2a2af0" stroke-width="1" points="0,544.3 45.6,482.2 51.6,545.2 153.6,431.7 183.6,676.7 387.6,254.3 465.6,349 597.6,209 627.6,393 669.6,344.2 699.6,405.8 759.6,337.1 765.6,425.3 795.6,261.8 819.6,400.3 879.6,299.4 933.6,531.5 999.6,450.5 1017.6,513.4 1113.6,444.7 1155.6,475.2 1179.6,438.6 1329.6,494.8 1503.6,229.4 1593.6,457 1593.6,135"/><text x="597" y="197" font-family="Liberation Sans" font-size="14" fill="#ff0000" text-anchor="middle">DP</text><path d="M590 200H604L597 207Z" fill="#ff0000" stroke="#600" stroke-width="0.8"/><text x="1489.6000000000001" y="287" font-family="Liberation Sans" font-size="16" fill="#0000ff" textLength="139.6" lengthAdjust="spacingAndGlyphs">Stop Trigger 1,3573</text><text x="1375.2" y="353.7" font-family="Liberation Sans" font-size="16" fill="#0000ff" textLength="254" lengthAdjust="spacingAndGlyphs">R/R: 0,6 at 1,3562 (Profit=611 USD)</text><text x="1308.7" y="463.7" font-family="Liberation Sans" font-size="16" fill="#0000ff" textLength="320.5" lengthAdjust="spacingAndGlyphs">Short 35 Mini Lots at 1,3545 (Risk=980 USD)</text><text x="1458.2" y="641.1" font-family="Liberation Sans" font-size="16" fill="#0000ff" textLength="170.8" lengthAdjust="spacingAndGlyphs">100% Initial Risk 1,3517</text><g shape-rendering="crispEdges"><path fill="#ff0000" d="M8 800h3v2h-3zM14 800h3v2h-3zM50 792h3v10h-3zM182 803h3v15h-3zM188 803h3v23h-3zM194 803h3v31h-3zM200 803h3v36h-3zM206 803h3v36h-3zM212 803h3v33h-3zM218 803h3v30h-3zM224 803h3v26h-3zM230 803h3v22h-3zM236 803h3v17h-3zM242 803h3v12h-3zM248 803h3v12h-3zM254 803h3v11h-3zM260 803h3v9h-3zM266 803h3v4h-3zM272 799h3v3h-3zM278 793h3v9h-3zM284 789h3v13h-3zM290 791h3v11h-3zM296 796h3v6h-3zM302 800h3v2h-3zM308 795h3v7h-3zM314 788h3v14h-3zM320 776h3v26h-3zM326 765h3v37h-3zM332 756h3v46h-3zM932 803h3v41h-3zM1058 803h3v6h-3zM1172 794h3v8h-3zM1334 801h3v1h-3zM1340 799h3v3h-3zM1346 798h3v4h-3zM1352 796h3v6h-3zM1358 796h3v6h-3zM1364 796h3v6h-3zM1370 794h3v8h-3zM1376 789h3v13h-3zM1382 782h3v20h-3zM1388 778h3v24h-3zM1394 774h3v28h-3z"/><path fill="#000000" d="M20 797h3v5h-3zM26 794h3v8h-3zM32 792h3v10h-3zM38 789h3v13h-3zM44 790h3v12h-3zM56 795h3v7h-3zM62 798h3v4h-3zM68 801h3v1h-3zM74 801h3v1h-3zM80 800h3v2h-3zM86 799h3v3h-3zM92 798h3v4h-3zM98 797h3v5h-3zM104 796h3v6h-3zM110 795h3v7h-3zM116 795h3v7h-3zM122 794h3v8h-3zM128 793h3v9h-3zM134 793h3v9h-3zM140 793h3v9h-3zM146 791h3v11h-3zM152 788h3v14h-3zM158 791h3v11h-3zM164 790h3v12h-3zM170 791h3v11h-3zM338 753h3v49h-3zM626 801h3v1h-3zM632 803h3v6h-3zM638 803h3v13h-3zM644 803h3v18h-3zM650 803h3v21h-3zM656 803h3v20h-3zM662 803h3v18h-3zM668 803h3v18h-3zM674 803h3v18h-3zM680 803h3v17h-3zM686 803h3v17h-3zM692 803h3v20h-3zM698 803h3v22h-3zM704 803h3v23h-3zM884 800h3v2h-3zM890 803h3v10h-3zM896 803h3v21h-3zM902 803h3v33h-3zM908 803h3v43h-3zM914 803h3v42h-3zM920 803h3v41h-3zM926 803h3v40h-3zM938 803h3v40h-3zM944 803h3v39h-3zM950 803h3v37h-3zM956 803h3v34h-3zM962 803h3v32h-3zM968 803h3v30h-3zM974 803h3v30h-3zM980 803h3v29h-3zM986 803h3v27h-3zM992 803h3v24h-3zM998 803h3v21h-3zM1004 803h3v20h-3zM1010 803h3v20h-3zM1016 803h3v21h-3zM1022 803h3v22h-3zM1028 803h3v22h-3zM1034 803h3v20h-3zM1040 803h3v17h-3zM1046 803h3v14h-3zM1052 803h3v9h-3zM1064 803h3v4h-3zM1070 803h3v1h-3zM1076 801h3v1h-3zM1082 797h3v5h-3zM1088 795h3v7h-3zM1094 795h3v7h-3zM1100 795h3v7h-3zM1106 795h3v7h-3zM1112 795h3v7h-3zM1118 795h3v7h-3zM1124 795h3v7h-3zM1130 795h3v7h-3zM1136 796h3v6h-3zM1142 797h3v5h-3zM1148 797h3v5h-3zM1154 796h3v6h-3zM1160 795h3v7h-3zM1166 795h3v7h-3zM1178 795h3v7h-3zM1184 796h3v6h-3zM1190 796h3v6h-3zM1196 796h3v6h-3zM1202 797h3v5h-3zM1208 798h3v4h-3zM1214 798h3v4h-3zM1220 798h3v4h-3zM1226 800h3v2h-3zM1232 800h3v2h-3zM1238 801h3v1h-3zM1262 803h3v1h-3zM1268 803h3v2h-3zM1274 803h3v3h-3zM1280 803h3v3h-3zM1286 803h3v3h-3zM1292 803h3v3h-3zM1298 803h3v3h-3zM1304 803h3v4h-3zM1310 803h3v4h-3zM1316 803h3v6h-3zM1322 803h3v7h-3zM1328 803h3v3h-3zM1400 771h3v31h-3zM1406 768h3v34h-3zM1412 768h3v34h-3zM1418 766h3v36h-3zM1424 764h3v38h-3zM1430 764h3v38h-3zM1436 767h3v35h-3zM1442 770h3v32h-3zM1448 774h3v28h-3zM1454 776h3v26h-3zM1460 776h3v26h-3zM1514 768h3v34h-3zM1520 771h3v31h-3zM1526 778h3v24h-3zM1532 783h3v19h-3zM1538 788h3v14h-3zM1544 793h3v9h-3zM1550 795h3v7h-3zM1592 791h3v11h-3zM1598 796h3v6h-3zM1604 798h3v4h-3zM1610 803h3v2h-3zM1616 803h3v7h-3z"/><path fill="#0000ff" d="M344 748h3v54h-3zM350 745h3v57h-3zM356 738h3v64h-3zM362 732h3v70h-3zM368 729h3v73h-3zM374 730h3v72h-3zM380 730h3v72h-3zM386 730h3v72h-3zM392 735h3v67h-3zM398 739h3v63h-3zM404 744h3v58h-3zM410 750h3v52h-3zM416 757h3v45h-3zM422 762h3v40h-3zM428 764h3v38h-3zM434 768h3v34h-3zM440 772h3v30h-3zM446 777h3v25h-3zM452 779h3v23h-3zM458 782h3v20h-3zM464 785h3v17h-3zM470 787h3v15h-3zM476 786h3v16h-3zM482 786h3v16h-3zM488 786h3v16h-3zM494 786h3v16h-3zM500 788h3v14h-3zM506 791h3v11h-3zM512 791h3v11h-3zM518 792h3v10h-3zM524 793h3v9h-3zM530 794h3v8h-3zM536 795h3v7h-3zM542 796h3v6h-3zM548 796h3v6h-3zM554 796h3v6h-3zM560 796h3v6h-3zM566 797h3v5h-3zM572 797h3v5h-3zM578 796h3v6h-3zM584 794h3v8h-3zM590 788h3v14h-3zM596 784h3v18h-3zM602 784h3v18h-3zM608 784h3v18h-3zM614 785h3v17h-3zM620 793h3v9h-3zM710 803h3v25h-3zM716 803h3v25h-3zM722 803h3v22h-3zM728 803h3v18h-3zM734 803h3v16h-3zM740 803h3v12h-3zM746 803h3v9h-3zM752 803h3v8h-3zM758 803h3v8h-3zM764 803h3v10h-3zM770 803h3v14h-3zM776 803h3v14h-3zM782 803h3v15h-3zM788 803h3v14h-3zM794 803h3v2h-3zM800 798h3v4h-3zM806 794h3v8h-3zM812 793h3v9h-3zM818 793h3v9h-3zM824 796h3v6h-3zM830 799h3v3h-3zM836 798h3v4h-3zM842 795h3v7h-3zM848 793h3v9h-3zM854 794h3v8h-3zM860 792h3v10h-3zM866 792h3v10h-3zM872 791h3v11h-3zM878 790h3v12h-3zM1466 774h3v28h-3zM1472 773h3v29h-3zM1478 772h3v30h-3zM1484 770h3v32h-3zM1490 769h3v33h-3zM1496 768h3v34h-3zM1502 765h3v37h-3zM1508 766h3v36h-3zM1556 797h3v5h-3zM1562 795h3v7h-3zM1568 793h3v9h-3zM1574 789h3v13h-3zM1580 788h3v14h-3zM1586 788h3v14h-3z"/></g><polyline shape-rendering="geometricPrecision" fill="none" stroke="#a8a8a8" stroke-width="2" points="10,774.4 237,774.4 250,777 262,784 273,791 373,791 390,776 410,756 422,747 430,744.3 983,744.3 995,748 1006.7,755.4 1021,770 1035.8,776.4 1050,782 1059,786 1203,786 1212,790 1221,792.7 1440,792.7 1455,780 1468,771.3 1623,771.3"/><polyline shape-rendering="geometricPrecision" fill="none" stroke="#a8a8a8" stroke-width="2" points="10,857.5 325,857.5 335,850 345,844 413,844 423,843 432,838 442,832.5 807,832.5 820,826 833,823 958,823 968,837.4 1517,837.4 1540,836.3 1555,830 1563,826.7 1587,826 1600,820 1623,820"/><g shape-rendering="crispEdges"><path fill="#0000ff" d="M20 980h3v2h-3zM32 979h3v3h-3zM38 980h3v2h-3zM44 979h3v3h-3zM50 978h3v4h-3zM56 980h3v2h-3zM62 979h3v3h-3zM68 980h3v2h-3zM74 980h3v2h-3zM80 980h3v2h-3zM86 980h3v2h-3zM92 979h3v3h-3zM98 979h3v3h-3zM110 980h3v2h-3zM116 980h3v2h-3zM122 979h3v3h-3zM128 980h3v2h-3zM134 980h3v2h-3zM140 979h3v3h-3zM152 973h3v9h-3zM164 976h3v6h-3zM170 974h3v8h-3zM182 964h3v18h-3zM188 972h3v10h-3zM194 973h3v9h-3zM200 976h3v6h-3zM206 974h3v8h-3zM212 977h3v5h-3zM218 977h3v5h-3zM230 975h3v7h-3zM236 977h3v5h-3zM242 977h3v5h-3zM248 979h3v3h-3zM254 978h3v4h-3zM266 976h3v6h-3zM272 976h3v6h-3zM278 977h3v5h-3zM284 979h3v3h-3zM290 978h3v4h-3zM302 973h3v9h-3zM314 954h3v28h-3zM320 965h3v17h-3zM326 968h3v14h-3zM332 965h3v17h-3zM338 970h3v12h-3zM344 965h3v17h-3zM350 971h3v11h-3zM356 973h3v9h-3zM362 966h3v16h-3zM368 969h3v13h-3zM374 974h3v8h-3zM380 975h3v7h-3zM386 974h3v8h-3zM392 974h3v8h-3zM398 978h3v4h-3zM404 980h3v2h-3zM410 979h3v3h-3zM416 979h3v3h-3zM428 979h3v3h-3zM434 980h3v2h-3zM440 981h3v1h-3zM446 980h3v2h-3zM452 981h3v1h-3zM464 980h3v2h-3zM470 980h3v2h-3zM476 980h3v2h-3zM482 978h3v4h-3zM488 980h3v2h-3zM494 980h3v2h-3zM500 980h3v2h-3zM506 980h3v2h-3zM512 981h3v1h-3zM518 981h3v1h-3zM530 981h3v1h-3zM536 981h3v1h-3zM542 981h3v1h-3zM548 980h3v2h-3zM554 979h3v3h-3zM560 980h3v2h-3zM566 981h3v1h-3zM572 980h3v2h-3zM584 979h3v3h-3zM596 974h3v8h-3zM602 974h3v8h-3zM608 979h3v3h-3zM614 979h3v3h-3zM620 980h3v2h-3zM632 975h3v7h-3zM638 980h3v2h-3zM644 980h3v2h-3zM650 980h3v2h-3zM656 980h3v2h-3zM662 979h3v3h-3zM668 979h3v3h-3zM674 979h3v3h-3zM680 980h3v2h-3zM686 980h3v2h-3zM698 979h3v3h-3zM704 979h3v3h-3zM710 980h3v2h-3zM716 979h3v3h-3zM722 979h3v3h-3zM728 979h3v3h-3zM734 978h3v4h-3zM740 979h3v3h-3zM752 974h3v8h-3zM758 977h3v5h-3zM770 974h3v8h-3zM776 977h3v5h-3zM782 977h3v5h-3zM800 961h3v21h-3zM806 971h3v11h-3zM812 974h3v8h-3zM818 975h3v7h-3zM824 975h3v7h-3zM830 976h3v6h-3zM836 978h3v4h-3zM842 977h3v5h-3zM848 976h3v6h-3zM854 977h3v5h-3zM860 978h3v4h-3zM866 979h3v3h-3zM872 977h3v5h-3zM890 962h3v20h-3zM896 971h3v11h-3zM902 969h3v13h-3zM908 972h3v10h-3zM914 972h3v10h-3zM920 972h3v10h-3zM926 972h3v10h-3zM932 972h3v10h-3zM938 972h3v10h-3zM944 973h3v9h-3zM950 976h3v6h-3zM956 978h3v4h-3zM962 977h3v5h-3zM968 979h3v3h-3zM974 980h3v2h-3zM980 979h3v3h-3zM986 979h3v3h-3zM992 980h3v2h-3zM1004 980h3v2h-3zM1010 979h3v3h-3zM1016 980h3v2h-3zM1022 980h3v2h-3zM1028 981h3v1h-3zM1034 980h3v2h-3zM1040 980h3v2h-3zM1046 981h3v1h-3zM1052 980h3v2h-3zM1058 979h3v3h-3zM1070 980h3v2h-3zM1076 979h3v3h-3zM1082 980h3v2h-3zM1088 981h3v1h-3zM1094 981h3v1h-3zM1100 981h3v1h-3zM1106 981h3v1h-3zM1118 981h3v1h-3zM1124 981h3v1h-3zM1130 981h3v1h-3zM1136 981h3v1h-3zM1142 981h3v1h-3zM1154 981h3v1h-3zM1160 981h3v1h-3zM1166 981h3v1h-3zM1172 981h3v1h-3zM1184 980h3v2h-3zM1190 980h3v2h-3zM1196 980h3v2h-3zM1202 981h3v1h-3zM1208 981h3v1h-3zM1214 981h3v1h-3zM1220 981h3v1h-3zM1226 981h3v1h-3zM1232 980h3v2h-3zM1238 980h3v2h-3zM1250 980h3v2h-3zM1256 980h3v2h-3zM1262 980h3v2h-3zM1268 981h3v1h-3zM1274 980h3v2h-3zM1280 980h3v2h-3zM1286 980h3v2h-3zM1292 981h3v1h-3zM1298 980h3v2h-3zM1304 978h3v4h-3zM1310 979h3v3h-3zM1316 978h3v4h-3zM1322 979h3v3h-3zM1334 973h3v9h-3zM1340 976h3v6h-3zM1346 974h3v8h-3zM1352 973h3v9h-3zM1358 974h3v8h-3zM1370 972h3v10h-3zM1376 974h3v8h-3zM1382 974h3v8h-3zM1388 976h3v6h-3zM1394 976h3v6h-3zM1400 973h3v9h-3zM1406 975h3v7h-3zM1412 977h3v5h-3zM1418 975h3v7h-3zM1424 979h3v3h-3zM1436 975h3v7h-3zM1442 977h3v5h-3zM1448 975h3v7h-3zM1454 976h3v6h-3zM1466 976h3v6h-3zM1472 975h3v7h-3zM1478 976h3v6h-3zM1484 974h3v8h-3zM1490 971h3v11h-3zM1496 970h3v12h-3zM1502 970h3v12h-3zM1508 972h3v10h-3zM1514 975h3v7h-3zM1520 973h3v9h-3zM1526 974h3v8h-3zM1532 977h3v5h-3zM1538 973h3v9h-3zM1544 977h3v5h-3zM1550 978h3v4h-3zM1556 978h3v4h-3zM1562 977h3v5h-3zM1568 979h3v3h-3zM1574 978h3v4h-3zM1580 977h3v5h-3zM1598 944h3v38h-3zM1604 927h3v55h-3zM1610 958h3v24h-3zM1616 964h3v18h-3zM1622 970h3v12h-3z"/><path fill="#ff0000" d="M26 976h3v6h-3zM104 979h3v3h-3zM146 978h3v4h-3zM158 968h3v14h-3zM176 960h3v22h-3zM224 972h3v10h-3zM260 972h3v10h-3zM296 972h3v10h-3zM308 964h3v18h-3zM422 978h3v4h-3zM458 979h3v3h-3zM578 979h3v3h-3zM590 973h3v9h-3zM626 973h3v9h-3zM692 978h3v4h-3zM746 975h3v7h-3zM764 974h3v8h-3zM788 968h3v14h-3zM794 962h3v20h-3zM878 976h3v6h-3zM884 946h3v36h-3zM998 979h3v3h-3zM1064 979h3v3h-3zM1112 980h3v2h-3zM1148 981h3v1h-3zM1178 978h3v4h-3zM1244 980h3v2h-3zM1328 974h3v8h-3zM1364 963h3v19h-3zM1430 974h3v8h-3zM1460 974h3v8h-3zM1586 973h3v9h-3zM1592 881h3v101h-3z"/></g><g font-family="Liberation Sans" font-size="11" fill="#000"><text x="3" y="113" textLength="136" lengthAdjust="spacingAndGlyphs">MTP Analysis, MTP ATRStop</text><text x="2.5" y="738" textLength="41.5" lengthAdjust="spacingAndGlyphs">MTP STF</text><text x="2.5" y="891" textLength="45.8" lengthAdjust="spacingAndGlyphs">MTP VSA</text><text x="2.5" y="987" textLength="117" lengthAdjust="spacingAndGlyphs">© 2014 NinjaTrader, LLC</text></g><path d="M1635.5 229L1641.5 222.5H1677V235.5H1641.5Z" fill="#000" stroke="#000" stroke-width="1"/><text x="1642" y="233" font-family="Liberation Sans" font-size="11" fill="#fff">1,3583</text><path d="M1635.5 440L1641.5 433.5H1677V446.5H1641.5Z" fill="#0000ff" stroke="#000" stroke-width="1"/><text x="1642" y="444" font-family="Liberation Sans" font-size="11" fill="#fff">1,3550</text><path d="M1635.5 771L1641.5 764.5H1683.5V777.5H1641.5Z" fill="#a8a8a8" stroke="#000" stroke-width="1"/><text x="1642" y="775" font-family="Liberation Sans" font-size="11" fill="#000">0,00122</text><path d="M1635.5 802L1641.5 795.5H1699.5V808.5H1641.5Z" fill="#0000ff" stroke="#000" stroke-width="1"/><text x="1642" y="806" font-family="Liberation Sans" font-size="11" fill="#fff">-0,0000165</text><path d="M1635.5 820L1641.5 813.5H1693.5V826.5H1641.5Z" fill="#a8a8a8" stroke="#000" stroke-width="1"/><text x="1642" y="824" font-family="Liberation Sans" font-size="11" fill="#000">-0,000719</text><path d="M1635.5 970L1641.5 963.5H1672V976.5H1641.5Z" fill="#0000ff" stroke="#000" stroke-width="1"/><text x="1642" y="974" font-family="Liberation Sans" font-size="11" fill="#fff">200M</text><g font-family="Liberation Serif" font-weight="bold" fill="#820c0c" style="paint-order:stroke" stroke="#1a0000" stroke-width="1.1"><text x="1037" y="134" font-size="28.5" textLength="519" lengthAdjust="spacingAndGlyphs" filter="url(#sh)">WWW.TRADING-SOFTWARE-COLLECTION.COM</text><text x="1038" y="155.5" font-size="20.5" textLength="274" lengthAdjust="spacingAndGlyphs" filter="url(#sh)">ANDREYBBRV@GMAIL.COM</text><text x="1332" y="155.5" font-size="20.5" textLength="224" lengthAdjust="spacingAndGlyphs" filter="url(#sh)">SKYPE: ANDREYBBRV</text></g><defs><filter id="sh" x="-5%" y="-20%" width="110%" height="150%"><feDropShadow dx="1.5" dy="1.5" stdDeviation="0.8" flood-color="#000" flood-opacity="0.6"/></filter></defs></svg>
<div class="a" style="left:1710px;top:22px;width:210px;height:1018px;background:#bfccda"></div>
<div class="a" style="left:1710px;top:22px;width:1px;height:1018px;background:#6a6a6a"></div>
<div class="a" style="left:1711px;top:22px;width:209px;height:1px;background:#6f7c8a"></div>
<div class="a" style="left:1714px;top:26px;width:203px;height:49px;background:#a8b4c0;border-top:2px solid #7a8088;border-left:2px solid #7a8088;border-right:2px solid #fff;border-bottom:2px solid #fff"></div>
<div class="a" style="left:1716px;top:28px;width:199px;height:45px;background:linear-gradient(90deg,#2a24c4,#2b26c0 70%,#262a9c)"></div>
<svg class="a" style="left:1710px;top:22px" width="210" height="60"><text x="12.6" y="32.8" font-family="Liberation Sans" font-weight="bold" font-size="29.5" fill="#fff" textLength="71.4" lengthAdjust="spacingAndGlyphs">MTP</text><text x="86.6" y="32.8" font-family="Liberation Sans" font-size="29.5" fill="#fff" textLength="116" lengthAdjust="spacingAndGlyphs">redictor</text><text x="12.2" y="44.9" font-family="Liberation Sans" font-weight="bold" font-size="6.6" fill="#e4e4f4" textLength="187" lengthAdjust="spacing">PROFESSIONAL TRADING SOFTWARE</text></svg>
<div class="a" style="left:1717px;top:87px;width:196px;height:33px;border:1px solid #f4f7fa;border-radius:3px"></div>
<div class="a" style="left:1723px;top:80px;padding:0 2px;background:#bfccda;font-size:11.55px;line-height:13px;white-space:pre">Position Sizing/Risk Management</div>
<div class="a" style="left:1722px;top:97px;width:141px;height:19px;background:#f4f4f4;border:1px solid #a8a8a8;border-right:none;color:#000;font-size:11.1px;font-weight:normal;line-height:17px;text-align:center;white-space:pre;">Sim101</div>
<div class="a" style="left:1863px;top:97px;width:42px;height:19px;background:#8b0000;border:none;color:#fff;font-size:11.1px;font-weight:normal;line-height:17px;text-align:center;white-space:pre;">NT</div>
<div class="a" style="left:1716px;top:133px;width:197px;height:273px;border:1px solid #f4f7fa;border-radius:3px"></div>
<div class="a" style="left:1722px;top:126px;padding:0 2px;background:#bfccda;font-size:11.01px;line-height:13px;white-space:pre">Trade Setup</div>
<div class="a" style="left:1723px;top:142px;width:183px;height:17px;background:#90ee90;border:1px solid #9aa89a;color:#000;font-size:11.0px;font-weight:normal;line-height:15px;text-align:center;white-space:pre;">Ready to Trade</div>
<div class="a" style="left:1723px;top:168px;width:183px;height:28px;border:1px solid #f4f7fa;border-radius:3px"></div>
<div class="a" style="left:1729px;top:161px;padding:0 2px;background:#bfccda;font-size:11.66px;line-height:13px;white-space:pre">Direction</div>
<div class="a" style="left:1729px;top:175px;width:170px;height:15px;background:#ff0000;border:none;color:#fff;font-size:11px;font-weight:bold;line-height:13px;text-align:center;white-space:pre;">SHORT</div>
<div class="a" style="left:1723px;top:206px;width:183px;height:45px;border:1px solid #f4f7fa;border-radius:3px"></div>
<div class="a" style="left:1729px;top:199px;padding:0 2px;background:#bfccda;font-size:11.6px;line-height:13px;white-space:pre">Entry/Stop/Target</div>
<div class="a" style="left:1728px;top:215px;width:55px;height:15px;background:#f4f4f4;border:1px solid #b0b0b0;color:#000;font-size:10.82px;font-weight:normal;line-height:13px;text-align:center;white-space:pre;">1,3545</div>
<div class="a" style="left:1786px;top:215px;width:55px;height:15px;background:#fff0f5;border:1px solid #b0b0b0;color:#000;font-size:11.1px;font-weight:normal;line-height:13px;text-align:center;white-space:pre;">1,3573</div>
<div class="a" style="left:1844px;top:215px;width:55px;height:15px;background:#f0fff0;border:1px solid #b0b0b0;color:#000;font-size:11.1px;font-weight:normal;line-height:13px;text-align:center;white-space:pre;">1,3562</div>
<div class="a" style="left:1728px;top:233px;width:55px;text-align:center;font-size:10.07px;line-height:13px;color:#000;white-space:pre;">Entry</div>
<div class="a" style="left:1786px;top:233px;width:55px;text-align:center;font-size:11.1px;line-height:13px;color:#000;white-space:pre;">Stop</div>
<div class="a" style="left:1844px;top:233px;width:55px;text-align:center;font-size:11.1px;line-height:13px;color:#000;white-space:pre;">Target</div>
<div class="a" style="left:1723px;top:261px;width:183px;height:50px;border:1px solid #f4f7fa;border-radius:3px"></div>
<div class="a" style="left:1729px;top:254px;padding:0 2px;background:#bfccda;font-size:11.12px;line-height:13px;white-space:pre">Risk/Reward</div>
<div class="a" style="left:1729px;top:271px;width:57px;text-align:center;font-size:11.1px;line-height:13px;color:#000;white-space:pre;">Risk</div>
<div class="a" style="left:1789px;top:271px;width:57px;text-align:center;font-size:11.06px;line-height:13px;color:#000;white-space:pre;">Reward</div>
<div class="a" style="left:1849px;top:271px;width:50px;text-align:center;font-size:11.1px;line-height:13px;color:#000;white-space:pre;">R/R</div>
<div class="a" style="left:1729px;top:285px;width:57px;height:15px;background:#fff0f5;border:1px solid #c8c0c0;color:#000;font-size:11.1px;font-weight:normal;line-height:13px;text-align:center;white-space:pre;">980</div>
<div class="a" style="left:1789px;top:285px;width:57px;height:15px;background:#f0fff0;border:1px solid #c0c8c0;color:#000;font-size:11.1px;font-weight:normal;line-height:13px;text-align:center;white-space:pre;">611</div>
<div class="a" style="left:1849px;top:285px;width:50px;height:15px;background:#90ee90;border:1px solid #a0b0a0;color:#000;font-size:11.1px;font-weight:normal;line-height:13px;text-align:center;white-space:pre;">0,6</div>
<div class="a" style="left:1724px;top:321px;width:182px;height:52px;border:1px solid #f4f7fa;border-radius:3px"></div>
<div class="a" style="left:1730px;top:314px;padding:0 2px;background:#bfccda;font-size:11.04px;line-height:13px;white-space:pre">Position Size</div>
<div class="a" style="left:1736px;top:330px;width:76px;height:21px;background:#fff;border:1px solid #b8c0c8"></div>
<div class="a" style="left:1737px;top:332px;width:59px;text-align:center;font-size:11.1px;line-height:13px;color:#777">350000</div>
<div class="a" style="left:1797px;top:332px;width:13px;height:8px;background:#f0f0f0;border:1px solid #c8c8c8"></div>
<div class="a" style="left:1797px;top:340px;width:13px;height:8px;background:#f0f0f0;border:1px solid #c8c8c8"></div>
<div class="a" style="left:1800px;top:334px;width:0;height:0;border-left:3.5px solid transparent;border-right:3.5px solid transparent;border-bottom:3.5px solid #4a70c8"></div>
<div class="a" style="left:1800px;top:343px;width:0;height:0;border-left:3.5px solid transparent;border-right:3.5px solid transparent;border-top:3.5px solid #4a70c8"></div>
<div class="a" style="left:1818px;top:334px;font-size:11.08px;line-height:13px;color:#000;white-space:pre;">currency</div>
<div class="a" style="left:1736px;top:356px;width:12px;height:12px;background:linear-gradient(135deg,#dcdcdc,#f8f8f8);border:1px solid #8a8a8a"></div>
<div class="a" style="left:1752px;top:356px;font-size:11.38px;line-height:13px;color:#000;white-space:pre;">Override position size</div>
<div class="a" style="left:1723px;top:378px;width:57px;height:24px;background:#228b22;border:1px solid #555;color:#fff;font-size:11.3px;font-weight:normal;line-height:22px;text-align:center;white-space:pre;"><span style="display:inline-block;transform:scaleX(0.841)">TRADE</span></div>
<div class="a" style="left:1787px;top:378px;width:57px;height:24px;background:#f4f4f4;border:1px solid #777;color:#4a4a4a;font-size:11.3px;font-weight:normal;line-height:22px;text-align:center;white-space:pre;"><span style="display:inline-block;transform:scaleX(0.841)">CANCEL</span></div>
<div class="a" style="left:1850px;top:378px;width:57px;height:24px;background:#f4f4f4;border:1px solid #777;color:#4a4a4a;font-size:11.3px;font-weight:normal;line-height:22px;text-align:center;white-space:pre;"><span style="display:inline-block;transform:scaleX(0.841)">SYNC</span></div>
<div class="a" style="left:1716px;top:416px;width:197px;height:68px;border:1px solid #f4f7fa;border-radius:3px"></div>
<div class="a" style="left:1722px;top:409px;padding:0 2px;background:#bfccda;font-size:11.05px;line-height:13px;white-space:pre">Entry Order Type</div>
<div class="a" style="left:1724px;top:427px;width:90px;height:22px;background:#f4f4f4;border:1px solid #666;color:#000;font-size:11.3px;font-weight:bold;line-height:20px;text-align:center;white-space:pre;">MANUAL</div>
<div class="a" style="left:1814px;top:427px;width:90px;height:22px;background:#4169e1;border:1px solid #666;border-left:none;color:#fff;font-size:11.3px;font-weight:bold;line-height:20px;text-align:center;white-space:pre;">AUTO</div>
<div class="a" style="left:1724px;top:456px;width:42px;height:22px;background:#f4f4f4;border:1px solid #666;color:#333;font-size:11.3px;font-weight:normal;line-height:20px;text-align:center;white-space:pre;"><span style="display:inline-block;transform:scaleX(0.841)">MKT</span></div>
<div class="a" style="left:1765px;top:456px;width:42px;height:22px;background:#f4f4f4;border:1px solid #666;color:#333;font-size:11.3px;font-weight:normal;line-height:20px;text-align:center;white-space:pre;"><span style="display:inline-block;transform:scaleX(0.841)">LMT</span></div>
<div class="a" style="left:1806px;top:456px;width:42px;height:22px;background:#4169e1;border:1px solid #666;color:#1a2a4a;font-size:11.3px;font-weight:normal;line-height:20px;text-align:center;white-space:pre;"><span style="display:inline-block;transform:scaleX(0.841)">STP</span></div>
<div class="a" style="left:1847px;top:456px;width:57px;height:22px;background:#f4f4f4;border:1px solid #666;color:#333;font-size:11.3px;font-weight:normal;line-height:20px;text-align:center;white-space:pre;"><span style="display:inline-block;transform:scaleX(0.823)">STPLMT</span></div>
<div class="a" style="left:1716px;top:494px;width:197px;height:56px;border:1px solid #f4f7fa;border-radius:3px"></div>
<div class="a" style="left:1722px;top:487px;padding:0 2px;background:#bfccda;font-size:11.14px;line-height:13px;white-space:pre">Bracket Orders</div>
<div class="a" style="left:1726px;top:507px;font-size:10.89px;line-height:13px;color:#000;white-space:pre;">Time In Force:</div>
<div class="a" style="left:1827px;top:503px;width:75px;height:21px;background:#f4f4f4;border:1px solid #c4c4c4;border-radius:3px"></div>
<div class="a" style="left:1831px;top:507px;font-size:11.1px;line-height:13px;color:#8a8a8a">Gtc</div>
<div class="a" style="left:1886px;top:511px;width:0;height:0;border-left:5px solid transparent;border-right:5px solid transparent;border-top:5px solid #a8a8a8"></div>
<div class="a" style="left:1727px;top:530px;width:12px;height:12px;background:linear-gradient(135deg,#dcdcdc,#f8f8f8);border:1px solid #8a8a8a"></div>
<svg class="a" style="left:1728px;top:531px" width="10" height="10"><path d="M1.5 5L4 8.5L9 1" stroke="#2a4aa8" stroke-width="1.6" fill="none"/></svg>
<div class="a" style="left:1745px;top:529px;font-size:11.03px;line-height:13px;color:#000;white-space:pre;">One Cancels Other (OCO)</div>
<div class="a" style="left:1716px;top:561px;width:197px;height:76px;border:1px solid #f4f7fa;border-radius:3px"></div>
<div class="a" style="left:1722px;top:554px;padding:0 2px;background:#bfccda;font-size:11.39px;line-height:13px;white-space:pre">Position Status</div>
<div class="a" style="left:1725px;top:570px;width:50px;text-align:center;font-size:11.1px;line-height:13px;color:#000;white-space:pre;">Qty</div>
<div class="a" style="left:1790px;top:570px;width:48px;text-align:center;font-size:11px;line-height:13px;color:#000;white-space:pre;">PnL</div>
<div class="a" style="left:1850px;top:570px;width:58px;text-align:center;font-size:10.72px;line-height:13px;color:#000;white-space:pre;">Avg Price</div>
<div class="a" style="left:1721px;top:587px;width:55px;height:17px;background:#faeee4;border:1px solid #888;border-right:none;color:#000;font-size:11.1px;font-weight:bold;line-height:15px;text-align:center;white-space:pre;">FLAT</div>
<div class="a" style="left:1776px;top:587px;width:79px;height:17px;background:#000;border:1px solid #888;border-left:none;border-right:none;color:#fff;font-size:11px;font-weight:bold;line-height:15px;text-align:center;white-space:pre;">PnL</div>
<div class="a" style="left:1855px;top:587px;width:54px;height:17px;background:#faeee4;border:1px solid #888;border-left:none;color:#000;font-size:11px;font-weight:bold;line-height:15px;text-align:center;white-space:pre;">0</div>
<div class="a" style="left:1721px;top:608px;width:50px;height:23px;background:#f4f4f4;border:1px solid #777;color:#4a4a4a;font-size:11.3px;font-weight:normal;line-height:21px;text-align:center;white-space:pre;"><span style="display:inline-block;transform:scaleX(0.841)">CLOSE</span></div>
<div class="a" style="left:1772px;top:608px;width:45px;height:23px;background:#f4f4f4;border:1px solid #777;color:#4a4a4a;font-size:11.3px;font-weight:normal;line-height:21px;text-align:center;white-space:pre;"><span style="display:inline-block;transform:scaleX(0.841)">B/E</span></div>
<div class="a" style="left:1818px;top:608px;width:45px;height:23px;background:#f4f4f4;border:1px solid #777;color:#4a4a4a;font-size:11.3px;font-weight:normal;line-height:21px;text-align:center;white-space:pre;"><span style="display:inline-block;transform:scaleX(0.841)">ATR</span></div>
<div class="a" style="left:1864px;top:608px;width:45px;height:23px;background:#f4f4f4;border:1px solid #777;color:#4a4a4a;font-size:11.3px;font-weight:normal;line-height:21px;text-align:center;white-space:pre;"><span style="display:inline-block;transform:scaleX(0.841)">BAR</span></div>
<div class="a" style="left:1716px;top:646px;width:197px;height:60px;border:1px solid #f4f7fa;border-radius:3px"></div>
<div class="a" style="left:1722px;top:639px;padding:0 2px;background:#bfccda;font-size:11.87px;line-height:13px;white-space:pre">Instrument</div>
<div class="a" style="left:1726px;top:656px;font-size:11.1px;line-height:13px;color:#000;white-space:pre;">Ask:</div>
<div class="a" style="left:1786px;top:654px;font-size:11.1px;line-height:13px;color:#1010ff;white-space:pre;">1,3586</div>
<div class="a" style="left:1851px;top:653px;font-size:10px;line-height:13px;color:#000;white-space:pre;font-weight:bold">EURUSD</div>
<div class="a" style="left:1726px;top:671px;font-size:11.1px;line-height:13px;color:#000;white-space:pre;">Bid:</div>
<div class="a" style="left:1786px;top:670px;font-size:11.1px;line-height:13px;color:#ff1010;white-space:pre;">1,3583</div>
<div class="a" style="left:1853px;top:671px;font-size:10.97px;line-height:13px;color:#000;white-space:pre;">Currency</div>
<div class="a" style="left:1726px;top:687px;font-size:10.79px;line-height:13px;color:#000;white-space:pre;">Spread:</div>
<div class="a" style="left:1786px;top:686px;font-size:11.1px;line-height:13px;color:#000;white-space:pre;">3</div>
<div class="a" style="left:1716px;top:715px;width:198px;height:55px;border:1px solid #f4f7fa;border-radius:3px"></div>
<div class="a" style="left:1722px;top:708px;padding:0 2px;background:#bfccda;font-size:11.71px;line-height:13px;white-space:pre">Trading Account</div>
<div class="a" style="left:1728px;top:727px;width:117px;height:20px;background:#f4f4f4;border:1px solid #c4c4c4;border-radius:3px"></div>
<div class="a" style="left:1732px;top:730px;font-size:11.1px;line-height:13px;color:#8a8a8a">Sim101</div>
<div class="a" style="left:1829px;top:735px;width:0;height:0;border-left:5px solid transparent;border-right:5px solid transparent;border-top:5px solid #a8a8a8"></div>
<div class="a" style="left:1851px;top:731px;width:12px;height:12px;background:linear-gradient(135deg,#dcdcdc,#f8f8f8);border:1px solid #8a8a8a"></div>
<svg class="a" style="left:1852px;top:732px" width="10" height="10"><path d="M1.5 5L4 8.5L9 1" stroke="#2a4aa8" stroke-width="1.6" fill="none"/></svg>
<div class="a" style="left:1868px;top:730px;font-size:10.31px;line-height:13px;color:#000;white-space:pre;">Privacy</div>
<div class="a" style="left:1728px;top:751px;font-size:10.75px;line-height:13px;color:#000;white-space:pre;">Cash Balance:</div>
<div class="a" style="left:1809px;top:751px;font-size:10px;line-height:13px;color:#000;white-space:pre;">*********</div>
<div class="a" style="left:1876px;top:751px;font-size:11.1px;line-height:13px;color:#000;white-space:pre;">USD</div>
<div class="a" style="left:1716px;top:781px;width:198px;height:152px;border:1px solid #f4f7fa;border-radius:3px"></div>
<div class="a" style="left:1722px;top:774px;padding:0 2px;background:#bfccda;font-size:11.51px;line-height:13px;white-space:pre">Auto Trade Management</div>
<div class="a" style="left:1722px;top:799px;width:184px;height:54px;border:1px solid #f4f7fa;border-radius:3px"></div>
<div class="a" style="left:1728px;top:792px;padding:0 2px;background:#bfccda;font-size:11.26px;line-height:13px;white-space:pre">Auto Breakeven</div>
<div class="a" style="left:1730px;top:809px;font-size:11.1px;line-height:13px;color:#000;white-space:pre;">Offset:</div>
<div class="a" style="left:1775px;top:810px;font-size:11.1px;line-height:13px;color:#000;white-space:pre;">+</div>
<div class="a" style="left:1787px;top:807px;width:38px;height:21px;background:#fff;border:1px solid #b8c0c8"></div>
<div class="a" style="left:1788px;top:809px;width:21px;text-align:center;font-size:11.1px;line-height:13px;color:#000">0</div>
<div class="a" style="left:1810px;top:809px;width:13px;height:8px;background:#f0f0f0;border:1px solid #c8c8c8"></div>
<div class="a" style="left:1810px;top:817px;width:13px;height:8px;background:#f0f0f0;border:1px solid #c8c8c8"></div>
<div class="a" style="left:1813px;top:811px;width:0;height:0;border-left:3.5px solid transparent;border-right:3.5px solid transparent;border-bottom:3.5px solid #4a70c8"></div>
<div class="a" style="left:1813px;top:820px;width:0;height:0;border-left:3.5px solid transparent;border-right:3.5px solid transparent;border-top:3.5px solid #4a70c8"></div>
<div class="a" style="left:1828px;top:809px;font-size:11.1px;line-height:13px;color:#000;white-space:pre;">pips</div>
<div class="a" style="left:1864px;top:807px;width:38px;height:24px;background:#f4f4f4;border:1px solid #777;color:#000;font-size:10.5px;font-weight:normal;line-height:22px;text-align:center;white-space:pre;">OFF</div>
<div class="a" style="left:1729px;top:833px;font-size:11.1px;line-height:13px;color:#000;white-space:pre;">Trigger:</div>
<div class="a" style="left:1783px;top:830px;width:42px;height:21px;background:#fff;border:1px solid #b8c0c8"></div>
<div class="a" style="left:1784px;top:832px;width:25px;text-align:center;font-size:11.1px;line-height:13px;color:#000">100</div>
<div class="a" style="left:1810px;top:832px;width:13px;height:8px;background:#f0f0f0;border:1px solid #c8c8c8"></div>
<div class="a" style="left:1810px;top:840px;width:13px;height:8px;background:#f0f0f0;border:1px solid #c8c8c8"></div>
<div class="a" style="left:1813px;top:834px;width:0;height:0;border-left:3.5px solid transparent;border-right:3.5px solid transparent;border-bottom:3.5px solid #4a70c8"></div>
<div class="a" style="left:1813px;top:843px;width:0;height:0;border-left:3.5px solid transparent;border-right:3.5px solid transparent;border-top:3.5px solid #4a70c8"></div>
<div class="a" style="left:1827px;top:833px;font-size:10.8px;line-height:13px;color:#000;white-space:pre;">% risk</div>
<div class="a" style="left:1722px;top:864px;width:184px;height:62px;border:1px solid #f4f7fa;border-radius:3px"></div>
<div class="a" style="left:1728px;top:857px;padding:0 2px;background:#bfccda;font-size:11.39px;line-height:13px;white-space:pre">Auto ATR Trailing Stop</div>
<div class="a" style="left:1728px;top:877px;font-size:11.1px;line-height:13px;color:#000;white-space:pre;">Offset:</div>
<div class="a" style="left:1777px;top:877px;font-size:11.1px;line-height:13px;color:#000;white-space:pre;">-</div>
<div class="a" style="left:1785px;top:875px;width:38px;height:21px;background:#fff;border:1px solid #b8c0c8"></div>
<div class="a" style="left:1786px;top:877px;width:21px;text-align:center;font-size:11.1px;line-height:13px;color:#000">1</div>
<div class="a" style="left:1808px;top:877px;width:13px;height:8px;background:#f0f0f0;border:1px solid #c8c8c8"></div>
<div class="a" style="left:1808px;top:885px;width:13px;height:8px;background:#f0f0f0;border:1px solid #c8c8c8"></div>
<div class="a" style="left:1811px;top:879px;width:0;height:0;border-left:3.5px solid transparent;border-right:3.5px solid transparent;border-bottom:3.5px solid #4a70c8"></div>
<div class="a" style="left:1811px;top:888px;width:0;height:0;border-left:3.5px solid transparent;border-right:3.5px solid transparent;border-top:3.5px solid #4a70c8"></div>
<div class="a" style="left:1826px;top:877px;font-size:11.1px;line-height:13px;color:#000;white-space:pre;">pips</div>
<div class="a" style="left:1864px;top:874px;width:38px;height:25px;background:#f4f4f4;border:1px solid #777;color:#000;font-size:10.5px;font-weight:normal;line-height:23px;text-align:center;white-space:pre;">OFF</div>
<div class="a" style="left:1728px;top:903px;font-size:11.1px;line-height:13px;color:#000;white-space:pre;">Trigger:</div>
<div class="a" style="left:1777px;top:900px;width:67px;height:20px;background:#f4f4f4;border:1px solid #c4c4c4;border-radius:3px"></div>
<div class="a" style="left:1781px;top:903px;font-size:11.1px;line-height:13px;color:#8a8a8a">STF</div>
<div class="a" style="left:1828px;top:908px;width:0;height:0;border-left:5px solid transparent;border-right:5px solid transparent;border-top:5px solid #a8a8a8"></div>
<div class="a" style="left:1716px;top:942px;width:199px;height:35px;border:1px solid #f4f7fa;border-radius:3px"></div>
<div class="a" style="left:1722px;top:935px;padding:0 2px;background:#bfccda;font-size:11.1px;line-height:13px;white-space:pre">Forex</div>
<div class="a" style="left:1724px;top:953px;font-size:11.09px;line-height:13px;color:#000;white-space:pre;">Trade Forex in:</div>
<div class="a" style="left:1811px;top:950px;width:91px;height:20px;background:linear-gradient(#f8f8f8,#e8e8e8 50%,#d8d8d8);border:1px solid #7a7a7a;border-radius:3px"></div>
<div class="a" style="left:1815px;top:953px;font-size:11.1px;line-height:13px;color:#000">Currency</div>
<div class="a" style="left:1886px;top:958px;width:0;height:0;border-left:5px solid transparent;border-right:5px solid transparent;border-top:5px solid #000"></div>
<div class="a" style="left:1712px;top:997px;font-size:11.26px;line-height:13px;color:#0000ee;white-space:pre;text-decoration:underline">© 2014 MTPredictor Ltd.</div>
<div class="a" style="left:1711px;top:1015px;width:209px;height:25px;background:#ececec;border-top:1px solid #b0b0b0"></div>
<div class="a" style="left:1714px;top:1017px;width:24px;height:20px;background:#33cc33;border:none;color:#000;font-size:12px;font-weight:normal;line-height:18px;text-align:center;white-space:pre;">C</div>
<div class="a" style="left:1742px;top:1017px;width:30px;height:20px;background:#33cc33;border:none;color:#000;font-size:12px;font-weight:normal;line-height:18px;text-align:center;white-space:pre;">RT</div>
<div class="a" style="left:1776px;top:1017px;width:127px;height:20px;background:#ffd700;border:none;color:#000;font-size:10.46px;font-weight:normal;line-height:18px;text-align:center;white-space:pre;">Sim101 - Sim</div>
<div class="a" style="left:0;top:1016px;width:1709px;height:24px;background:#e9e9e9;border-top:1px solid #dcdcdc"></div>
<div class="a" style="left:6px;top:1023px;width:0;height:0;border-top:4px solid transparent;border-bottom:4px solid transparent;border-right:4px solid #444"></div>
<div class="a" style="left:1698px;top:1023px;width:0;height:0;border-top:4px solid transparent;border-bottom:4px solid transparent;border-left:4px solid #444"></div>
<div class="a" style="left:1320px;top:1018px;width:371px;height:21px;border:1px solid #9a9a9a;border-radius:3px;background:linear-gradient(#f2f2f2,#dedede 45%,#d2d2d2 55%,#dadada)"></div>
<div class="a" style="left:1502px;top:1024px;width:7px;height:8px;border-left:1px solid #555;border-right:1px solid #555"></div>
<div class="a" style="left:1505px;top:1024px;width:1px;height:8px;background:#555"></div>
<div class="a" style="left:0;top:1040px;width:1920px;height:40px;background:linear-gradient(90deg,#8ea6c4 0%,#a9bdd7 2.5%,#a7bbd5 60%,#a6bad3 83%,#8a9eb6 87.5%,#8397af 100%)"></div>
<div class="a" style="left:0;top:1040px;width:1920px;height:1px;background:#5a6f8a"></div>
<div class="a" style="left:0;top:1041px;width:1920px;height:1px;background:#c9d6e6"></div>
<div class="a" style="left:8px;top:1041px;width:38px;height:38px;border-radius:50%;background:radial-gradient(circle at 50% 40%,#6fb8e8,#2a78c0 55%,#1a3f78);border:1px solid #1a2a48"></div>
<svg class="a" style="left:17px;top:1050px" width="20" height="20"><path d="M2 3Q5 1 9 3V9Q5 7 2 9Z" fill="#f25022"/><path d="M10 3Q14 5 18 3V9Q14 11 10 9Z" fill="#7fba00"/><path d="M2 10Q5 8 9 10V16Q5 14 2 16Z" fill="#00a4ef"/><path d="M10 10Q14 12 18 10V16Q14 18 10 16Z" fill="#ffb900"/></svg>
<div class="a" style="left:60px;top:1042px;width:58px;height:38px;border:1px solid #6b7f98;border-radius:3px;background:linear-gradient(#d0dcea,#b6c7dc 50%,#a8bcd4)"></div>
<div class="a" style="left:307px;top:1042px;width:60px;height:38px;border:1px solid #6b7f98;border-radius:3px;background:linear-gradient(#d0dcea,#b6c7dc 50%,#a8bcd4)"></div>
<div class="a" style="left:369px;top:1042px;width:59px;height:38px;border:1px solid #6b7f98;border-radius:3px;background:linear-gradient(#d0dcea,#b6c7dc 50%,#a8bcd4)"></div>
<div class="a" style="left:430px;top:1042px;width:60px;height:38px;border:1px solid #6b7f98;border-radius:3px;background:linear-gradient(#d0dcea,#b6c7dc 50%,#a8bcd4)"></div>
<div class="a" style="left:490px;top:1042px;width:58px;height:38px;border:1px solid #6b7f98;border-radius:3px;background:linear-gradient(#d0dcea,#b6c7dc 50%,#a8bcd4)"></div>
<div class="a" style="left:553px;top:1042px;width:62px;height:38px;border:1px solid #6b7f98;border-radius:3px;background:linear-gradient(#d0dcea,#b6c7dc 50%,#a8bcd4)"></div>
<svg class="a" style="left:72px;top:1047px" width="36" height="30"><path d="M2 6H14L16 9H33V27H2Z" fill="#e8c860" stroke="#b08830"/><rect x="4" y="11" width="28" height="15" fill="#f8e8a0"/><rect x="9" y="17" width="18" height="10" fill="#60a8e8" stroke="#2870b8"/><rect x="13" y="20" width="10" height="7" fill="#f8e8a0"/></svg>
<svg class="a" style="left:135px;top:1046px" width="28" height="32"><path d="M6 1H20L26 7V30H6Z" fill="#fff" stroke="#aaa"/><circle cx="16" cy="13" r="6" fill="none" stroke="#f09010" stroke-width="3"/><path d="M12 18L6 26" stroke="#f09010" stroke-width="4"/></svg>
<svg class="a" style="left:197px;top:1046px" width="30" height="30"><circle cx="15" cy="15" r="14" fill="#db4437"/><path d="M15 15L28 11A14 14 0 0 1 9 27Z" fill="#ffcd40"/><path d="M15 15L9 27A14 14 0 0 1 3 8Z" fill="#0f9d58"/><path d="M3 8A14 14 0 0 1 28 11L15 15Z" fill="#db4437"/><circle cx="15" cy="15" r="6.5" fill="#fff"/><circle cx="15" cy="15" r="5" fill="#4285f4"/></svg>
<svg class="a" style="left:258px;top:1045px" width="32" height="32"><path d="M3 5H22V30H3Z" fill="#f4f4f4" stroke="#999" transform="rotate(-8 12 17)"/><path d="M6 10H18M6 14H18M6 18H16M6 22H18" stroke="#bbb" transform="rotate(-8 12 17)"/><path d="M10 24L27 4L30 7L13 27L9 28Z" fill="#e8a030" stroke="#805010"/></svg>
<svg class="a" style="left:320px;top:1044px" width="34" height="34"><rect x="2" y="2" width="30" height="30" rx="2" fill="#1a3fd0" stroke="#0a1a70"/><rect x="9" y="2" width="15" height="9" fill="#e0e0e0"/><rect x="18" y="3" width="4" height="6" fill="#1a3fd0"/><rect x="5" y="15" width="24" height="15" fill="#fff"/><path d="M7 19H27M7 23H27M7 27H20" stroke="#d02020" stroke-width="1.5"/></svg>
<svg class="a" style="left:383px;top:1045px" width="32" height="32"><rect x="3" y="3" width="22" height="28" fill="#fff" stroke="#555"/><rect x="4" y="16" width="20" height="14" fill="#50b030"/><path d="M7 20V10H11V22M14 14H20M17 11V17" stroke="#000" stroke-width="1.3" fill="none"/><path d="M18 28L29 6L31 7L21 29Z" fill="#e8b030" stroke="#704010"/></svg>
<svg class="a" style="left:444px;top:1047px" width="32" height="28"><path d="M3 22Q4 6 16 5L13 9Q8 11 9 22Z" fill="#908880"/><path d="M11 10L17 24L26 6L29 8L18 28L8 9Z" fill="#d01818"/><path d="M29 8Q28 24 16 25L19 21Q24 19 23 10Z" fill="#908880"/></svg>
<svg class="a" style="left:504px;top:1047px" width="32" height="28"><path d="M3 22Q4 6 16 5L13 9Q8 11 9 22Z" fill="#908880"/><path d="M11 10L17 24L26 6L29 8L18 28L8 9Z" fill="#d01818"/><path d="M29 8Q28 24 16 25L19 21Q24 19 23 10Z" fill="#908880"/></svg>
<svg class="a" style="left:567px;top:1044px" width="34" height="34"><rect x="2" y="2" width="30" height="30" rx="5" fill="#3a80d8" stroke="#1a50a0"/><text x="7" y="12" font-size="8" font-weight="bold" fill="#fff" font-family="Liberation Sans">MTP</text><path d="M4 22L9 16L13 20L18 12L23 17L30 7" stroke="#fff" stroke-width="1.5" fill="none"/><text x="11" y="29" font-size="8" font-weight="bold" fill="#fff" font-family="Liberation Sans">v7</text></svg>
<div class="a" style="left:1681px;top:1052px;font-size:12px;color:#fff">EN</div>
<div class="a" style="left:1713px;top:1058px;width:0;height:0;border-left:5px solid transparent;border-right:5px solid transparent;border-bottom:5px solid #fff"></div>
<svg class="a" style="left:1733px;top:1051px" width="18" height="18"><rect x="0" y="0" width="18" height="18" rx="2" fill="#3a90e0"/><path d="M2 14Q1 9 5 9Q6 5 10 6Q14 4 15 9Q18 10 16 14Z" fill="#f8b020"/></svg>
<svg class="a" style="left:1757px;top:1051px" width="18" height="18"><rect x="0" y="0" width="18" height="18" rx="2" fill="#183860"/><text x="4" y="15" font-size="15" font-weight="bold" fill="#fff" font-family="Liberation Sans">S</text></svg>
<svg class="a" style="left:1781px;top:1051px" width="18" height="18"><rect x="5" y="5" width="12" height="10" fill="#dde" stroke="#333"/><rect x="1" y="1" width="5" height="8" fill="#eee" stroke="#333"/></svg>
<svg class="a" style="left:1805px;top:1051px" width="18" height="18"><path d="M2 6H6L11 2V16L6 12H2Z" fill="#eee" stroke="#333"/><path d="M13 6Q15 9 13 12M15 4Q18 9 15 14" stroke="#fff" fill="none"/></svg>
<div class="a" style="left:1852px;top:1045px;font-size:12px;color:#fff">23:34</div>
<div class="a" style="left:1838px;top:1061px;font-size:12px;color:#fff">18.06.2014</div>
<div class="a" style="left:1906px;top:1042px;width:14px;height:38px;border:1px solid #3a4450;background:linear-gradient(90deg,#7a8898,#5a6878)"></div>
</body></html>
